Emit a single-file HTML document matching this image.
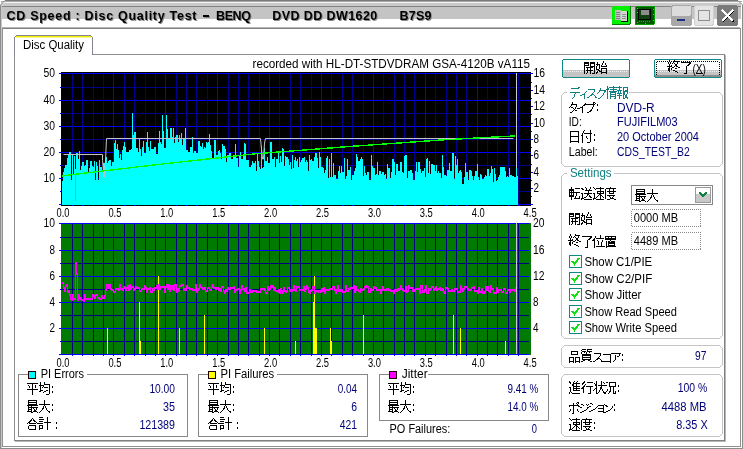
<!DOCTYPE html>
<html><head><meta charset="utf-8"><style>
html,body{margin:0;padding:0;background:#fff;width:743px;height:449px;overflow:hidden}
svg{display:block;will-change:transform}
text{font-family:"Liberation Sans",sans-serif}
</style></head><body>
<svg width="743" height="449" viewBox="0 0 743 449" shape-rendering="crispEdges">
<rect x="0" y="0" width="743" height="449" fill="#ffffff"/>
<rect x="1" y="0" width="741" height="1" fill="#7a7a7a"/>
<rect x="1" y="1" width="741" height="1" fill="#a8a8a8"/>
<rect x="2" y="2" width="739" height="1" fill="#f4f4f4"/>
<rect x="2" y="3" width="739" height="3" fill="#cacaca"/>
<rect x="2" y="6" width="739" height="1" fill="#848484"/>
<rect x="2" y="7" width="739" height="12" fill="#c4c4c4"/>
<rect x="2" y="27" width="738" height="1" fill="#b8b8b8"/>
<rect x="2" y="28" width="738" height="1" fill="#808080"/>
<rect x="0" y="1" width="1" height="448" fill="#8c8c8c"/>
<rect x="1" y="2" width="1" height="446" fill="#c8c8c8"/>
<rect x="2" y="28" width="1" height="419" fill="#909090"/>
<rect x="742" y="1" width="1" height="448" fill="#8c8c8c"/>
<rect x="740" y="28" width="1" height="419" fill="#909090"/>
<rect x="2" y="446" width="739" height="1" fill="#909090"/>
<rect x="0" y="448" width="743" height="1" fill="#8c8c8c"/>
<rect x="0" y="0" width="5" height="1" fill="#fff"/><rect x="0" y="0" width="1" height="5" fill="#fff"/>
<path d="M0.5 5L5 0.5" stroke="#8c8c8c" shape-rendering="auto"/><path d="M1.8 5.5L5.5 1.8" stroke="#e8e8e8" shape-rendering="auto"/>
<rect x="738" y="0" width="5" height="1" fill="#fff"/><rect x="742" y="0" width="1" height="5" fill="#fff"/>
<path d="M742.5 5L738 0.5" stroke="#8c8c8c" shape-rendering="auto"/>
<text x="7.5" y="20.5" font-size="12.5" fill="#8a8a8a" text-anchor="start" font-weight="bold" textLength="190" lengthAdjust="spacing" >CD Speed : Disc Quality Test</text>
<text x="6.5" y="19.5" font-size="12.5" fill="#000" text-anchor="start" font-weight="bold" textLength="190" lengthAdjust="spacing" >CD Speed : Disc Quality Test</text>
<text x="217" y="20.5" font-size="12.5" fill="#8a8a8a" text-anchor="start" font-weight="bold" textLength="35" lengthAdjust="spacing" >BENQ</text>
<text x="216" y="19.5" font-size="12.5" fill="#000" text-anchor="start" font-weight="bold" textLength="35" lengthAdjust="spacing" >BENQ</text>
<text x="273.3" y="20.5" font-size="12.5" fill="#8a8a8a" text-anchor="start" font-weight="bold" textLength="105" lengthAdjust="spacing" >DVD DD DW1620</text>
<text x="272.3" y="19.5" font-size="12.5" fill="#000" text-anchor="start" font-weight="bold" textLength="105" lengthAdjust="spacing" >DVD DD DW1620</text>
<text x="400.5" y="20.5" font-size="12.5" fill="#8a8a8a" text-anchor="start" font-weight="bold" textLength="32" lengthAdjust="spacing" >B7S9</text>
<text x="399.5" y="19.5" font-size="12.5" fill="#000" text-anchor="start" font-weight="bold" textLength="32" lengthAdjust="spacing" >B7S9</text>
<rect x="204" y="16" width="6" height="2" fill="#8a8a8a"/><rect x="203" y="15" width="6" height="2" fill="#000"/>
<rect x="612" y="6" width="19" height="19" rx="2" fill="#008000"/>
<rect x="612" y="6" width="18" height="18" rx="2" fill="#00f000"/>
<rect x="615" y="10" width="6" height="10" fill="#c0c0c0"/>
<path d="M616 12h4M616 14h4M616 16h4M616 18h4" stroke="#808080"/>
<rect x="621" y="11" width="7" height="11" fill="#000"/>
<rect x="621" y="11" width="6" height="10" fill="#d4d4d4"/>
<path d="M622 14h4M622 16h4M622 18h4" stroke="#909090"/>
<rect x="635" y="6" width="20" height="19" rx="2" fill="#00a000"/>
<rect x="636" y="7" width="18" height="17" rx="1" fill="#005800"/>
<rect x="638.5" y="9.5" width="12" height="10" fill="#104010" stroke="#000"/>
<rect x="641" y="10" width="8" height="5" fill="#8c8c8c"/>
<path d="M637 8h1M653 9h1M637 12h1M653 14h1M637 22h1M653 20h1M645 23h1" stroke="#20e020"/>
<path d="M639 21h12" stroke="#707070" stroke-dasharray="1 1"/>
<rect x="671" y="5" width="21" height="21" rx="3" fill="#a8a8a8"/>
<rect x="672" y="6" width="19" height="10" rx="2" fill="#dcdcdc"/>
<rect x="677" y="19" width="8" height="2" fill="#203080"/>
<rect x="694" y="5" width="20" height="21" rx="3" fill="#cfcfcf"/>
<rect x="695" y="6" width="18" height="19" rx="2" fill="#e4e4e4"/>
<rect x="698.5" y="10.5" width="11" height="10" fill="none" stroke="#909090"/>
<rect x="717" y="5" width="21" height="21" rx="3" fill="#7a7a7a"/>
<path d="M722 10L733 21M733 10L722 21" stroke="#000" stroke-width="2.2" transform="translate(0.6,0.6)"/>
<path d="M722 10L733 21M733 10L722 21" stroke="#fff" stroke-width="2"/>
<rect x="14" y="54" width="711" height="1" fill="#8c8c8c"/>
<rect x="14" y="54" width="1" height="387" fill="#8c8c8c"/>
<rect x="724" y="54" width="1" height="387" fill="#808080"/>
<rect x="725" y="55" width="1" height="387" fill="#b8b8b8"/>
<rect x="14" y="440" width="711" height="1" fill="#808080"/>
<rect x="15" y="441" width="711" height="1" fill="#b8b8b8"/>
<rect x="15" y="36" width="77" height="19" fill="#ffffff"/>
<path d="M14.5 55V37.5L16.5 35.5H90.5L92.5 37.5V55" fill="none" stroke="#858590"/>
<rect x="16" y="36" width="75" height="1" fill="#f0f000"/>
<rect x="16" y="37" width="75" height="1" fill="#f4f488"/>
<text x="23" y="48.5" font-size="12" fill="#000" text-anchor="start" font-weight="normal" textLength="61" lengthAdjust="spacingAndGlyphs" >Disc Quality</text>
<text x="252.5" y="67.5" font-size="12" fill="#000" text-anchor="start" font-weight="normal" textLength="277.5" lengthAdjust="spacingAndGlyphs" >recorded with HL-DT-STDVDRAM GSA-4120B vA115</text>
<rect x="61" y="72" width="470" height="134" fill="#000"/>
<rect x="62" y="87" width="469" height="1" fill="#00008c"/><rect x="62" y="100" width="469" height="1" fill="#0000ff"/><rect x="62" y="113" width="469" height="1" fill="#00008c"/><rect x="62" y="126" width="469" height="1" fill="#0000ff"/><rect x="62" y="139" width="469" height="1" fill="#00008c"/><rect x="62" y="152" width="469" height="1" fill="#0000ff"/><rect x="62" y="165" width="469" height="1" fill="#00008c"/><rect x="62" y="178" width="469" height="1" fill="#0000ff"/><rect x="62" y="191" width="469" height="1" fill="#00008c"/><rect x="72" y="73" width="1" height="131" fill="#00008c"/><rect x="82" y="73" width="1" height="131" fill="#00008c"/><rect x="93" y="73" width="1" height="131" fill="#00008c"/><rect x="103" y="73" width="1" height="131" fill="#00008c"/><rect x="113" y="73" width="1" height="131" fill="#0000ff"/><rect x="124" y="73" width="1" height="131" fill="#00008c"/><rect x="134" y="73" width="1" height="131" fill="#00008c"/><rect x="145" y="73" width="1" height="131" fill="#00008c"/><rect x="155" y="73" width="1" height="131" fill="#00008c"/><rect x="165" y="73" width="1" height="131" fill="#0000ff"/><rect x="176" y="73" width="1" height="131" fill="#00008c"/><rect x="186" y="73" width="1" height="131" fill="#00008c"/><rect x="196" y="73" width="1" height="131" fill="#00008c"/><rect x="207" y="73" width="1" height="131" fill="#00008c"/><rect x="217" y="73" width="1" height="131" fill="#0000ff"/><rect x="228" y="73" width="1" height="131" fill="#00008c"/><rect x="238" y="73" width="1" height="131" fill="#00008c"/><rect x="248" y="73" width="1" height="131" fill="#00008c"/><rect x="259" y="73" width="1" height="131" fill="#00008c"/><rect x="269" y="73" width="1" height="131" fill="#0000ff"/><rect x="279" y="73" width="1" height="131" fill="#00008c"/><rect x="290" y="73" width="1" height="131" fill="#00008c"/><rect x="300" y="73" width="1" height="131" fill="#00008c"/><rect x="311" y="73" width="1" height="131" fill="#00008c"/><rect x="321" y="73" width="1" height="131" fill="#0000ff"/><rect x="331" y="73" width="1" height="131" fill="#00008c"/><rect x="342" y="73" width="1" height="131" fill="#00008c"/><rect x="352" y="73" width="1" height="131" fill="#00008c"/><rect x="363" y="73" width="1" height="131" fill="#00008c"/><rect x="373" y="73" width="1" height="131" fill="#0000ff"/><rect x="383" y="73" width="1" height="131" fill="#00008c"/><rect x="394" y="73" width="1" height="131" fill="#00008c"/><rect x="404" y="73" width="1" height="131" fill="#00008c"/><rect x="414" y="73" width="1" height="131" fill="#00008c"/><rect x="425" y="73" width="1" height="131" fill="#0000ff"/><rect x="435" y="73" width="1" height="131" fill="#00008c"/><rect x="446" y="73" width="1" height="131" fill="#00008c"/><rect x="456" y="73" width="1" height="131" fill="#00008c"/><rect x="466" y="73" width="1" height="131" fill="#00008c"/><rect x="477" y="73" width="1" height="131" fill="#0000ff"/><rect x="487" y="73" width="1" height="131" fill="#00008c"/><rect x="497" y="73" width="1" height="131" fill="#00008c"/><rect x="508" y="73" width="1" height="131" fill="#00008c"/><rect x="518" y="73" width="1" height="131" fill="#00008c"/>
<rect x="59" y="73" width="474" height="1" fill="#0000ff"/>
<rect x="516" y="73" width="1" height="131" fill="#c8c8c8"/>
<rect x="59" y="204" width="474" height="1" fill="#0000ff"/>
<path fill="#00ffff" d="M62 181V205h1V181zM63 172V205h1V172zM64 168V205h1V168zM65 165V205h1V165zM66 165V205h1V165zM67 158V205h1V158zM68 154V205h1V154zM69 152V205h1V152zM70 152V205h1V152zM71 180V205h1V180zM72 154V205h1V154zM73 174V205h1V174zM74 156V205h1V156zM75 169V205h1V169zM76 153V205h1V153zM77 153V205h1V153zM78 159V205h1V159zM79 151V205h1V151zM80 170V205h1V170zM81 166V205h1V166zM82 162V205h1V162zM83 162V205h1V162zM84 166V205h1V166zM85 165V205h1V165zM86 160V205h1V160zM87 160V205h1V160zM88 172V205h1V172zM89 168V205h1V168zM90 161V205h1V161zM91 161V205h1V161zM92 166V205h1V166zM93 167V205h1V167zM94 161V205h1V161zM95 180V205h1V180zM96 162V205h1V162zM97 166V205h1V166zM98 180V205h1V180zM99 160V205h1V160zM100 167V205h1V167zM101 167V205h1V167zM102 172V205h1V172zM103 163V205h1V163zM104 163V205h1V163zM105 160V205h1V160zM106 157V205h1V157zM107 163V205h1V163zM108 161V205h1V161zM109 160V205h1V160zM110 160V205h1V160zM111 166V205h1V166zM112 162V205h1V162zM113 162V205h1V162zM114 143V205h1V143zM115 140V205h1V140zM116 149V205h1V149zM117 144V205h1V144zM118 150V205h1V150zM119 158V205h1V158zM120 154V205h1V154zM121 160V205h1V160zM122 150V205h1V150zM123 146V205h1V146zM124 142V205h1V142zM125 147V205h1V147zM126 152V205h1V152zM127 152V205h1V152zM128 152V205h1V152zM129 150V205h1V150zM130 150V205h1V150zM131 149V205h1V149zM132 113V205h1V113zM133 135V205h1V135zM134 132V205h1V132zM135 132V205h1V132zM136 148V205h1V148zM137 148V205h1V148zM138 152V205h1V152zM139 139V205h1V139zM140 149V205h1V149zM141 156V205h1V156zM142 147V205h1V147zM143 141V205h1V141zM144 153V205h1V153zM145 153V205h1V153zM146 142V205h1V142zM147 132V205h1V132zM148 147V205h1V147zM149 151V205h1V151zM150 141V205h1V141zM151 149V205h1V149zM152 149V205h1V149zM153 149V205h1V149zM154 147V205h1V147zM155 147V205h1V147zM156 154V205h1V154zM157 154V205h1V154zM158 143V205h1V143zM159 131V205h1V131zM160 142V205h1V142zM161 144V205h1V144zM162 115V205h1V115zM163 131V205h1V131zM164 148V205h1V148zM165 148V205h1V148zM166 115V205h1V115zM167 129V205h1V129zM168 138V205h1V138zM169 138V205h1V138zM170 128V205h1V128zM171 128V205h1V128zM172 137V205h1V137zM173 128V205h1V128zM174 143V205h1V143zM175 137V205h1V137zM176 135V205h1V135zM177 135V205h1V135zM178 142V205h1V142zM179 135V205h1V135zM180 139V205h1V139zM181 133V205h1V133zM182 145V205h1V145zM183 139V205h1V139zM184 139V205h1V139zM185 128V205h1V128zM186 150V205h1V150zM187 150V205h1V150zM188 152V205h1V152zM189 152V205h1V152zM190 147V205h1V147zM191 147V205h1V147zM192 137V205h1V137zM193 153V205h1V153zM194 151V205h1V151zM195 151V205h1V151zM196 153V205h1V153zM197 153V205h1V153zM198 141V205h1V141zM199 141V205h1V141zM200 146V205h1V146zM201 147V205h1V147zM202 143V205h1V143zM203 149V205h1V149zM204 147V205h1V147zM205 148V205h1V148zM206 142V205h1V142zM207 143V205h1V143zM208 142V205h1V142zM209 134V205h1V134zM210 145V205h1V145zM211 151V205h1V151zM212 158V205h1V158zM213 158V205h1V158zM214 140V205h1V140zM215 140V205h1V140zM216 155V205h1V155zM217 155V205h1V155zM218 151V205h1V151zM219 150V205h1V150zM220 153V205h1V153zM221 159V205h1V159zM222 144V205h1V144zM223 146V205h1V146zM224 146V205h1V146zM225 149V205h1V149zM226 162V205h1V162zM227 155V205h1V155zM228 155V205h1V155zM229 153V205h1V153zM230 153V205h1V153zM231 159V205h1V159zM232 159V205h1V159zM233 155V205h1V155zM234 155V205h1V155zM235 144V205h1V144zM236 158V205h1V158zM237 158V205h1V158zM238 167V205h1V167zM239 155V205h1V155zM240 152V205h1V152zM241 159V205h1V159zM242 159V205h1V159zM243 155V205h1V155zM244 143V205h1V143zM245 144V205h1V144zM246 160V205h1V160zM247 160V205h1V160zM248 160V205h1V160zM249 167V205h1V167zM250 167V205h1V167zM251 165V205h1V165zM252 161V205h1V161zM253 163V205h1V163zM254 163V205h1V163zM255 161V205h1V161zM256 171V205h1V171zM257 154V205h1V154zM258 161V205h1V161zM259 167V205h1V167zM260 169V205h1V169zM261 146V205h1V146zM262 168V205h1V168zM263 167V205h1V167zM264 148V205h1V148zM265 161V205h1V161zM266 161V205h1V161zM267 157V205h1V157zM268 163V205h1V163zM269 163V205h1V163zM270 142V205h1V142zM271 142V205h1V142zM272 159V205h1V159zM273 159V205h1V159zM274 157V205h1V157zM275 167V205h1V167zM276 159V205h1V159zM277 159V205h1V159zM278 153V205h1V153zM279 163V205h1V163zM280 156V205h1V156zM281 162V205h1V162zM282 148V205h1V148zM283 149V205h1V149zM284 166V205h1V166zM285 156V205h1V156zM286 157V205h1V157zM287 157V205h1V157zM288 159V205h1V159zM289 165V205h1V165zM290 162V205h1V162zM291 169V205h1V169zM292 155V205h1V155zM293 168V205h1V168zM294 160V205h1V160zM295 157V205h1V157zM296 161V205h1V161zM297 159V205h1V159zM298 167V205h1V167zM299 157V205h1V157zM300 162V205h1V162zM301 160V205h1V160zM302 158V205h1V158zM303 158V205h1V158zM304 157V205h1V157zM305 162V205h1V162zM306 160V205h1V160zM307 162V205h1V162zM308 171V205h1V171zM309 155V205h1V155zM310 160V205h1V160zM311 159V205h1V159zM312 161V205h1V161zM313 161V205h1V161zM314 157V205h1V157zM315 153V205h1V153zM316 153V205h1V153zM317 158V205h1V158zM318 168V205h1V168zM319 152V205h1V152zM320 157V205h1V157zM321 167V205h1V167zM322 167V205h1V167zM323 168V205h1V168zM324 173V205h1V173zM325 170V205h1V170zM326 158V205h1V158zM327 156V205h1V156zM328 178V205h1V178zM329 159V205h1V159zM330 177V205h1V177zM331 153V205h1V153zM332 177V205h1V177zM333 163V205h1V163zM334 175V205h1V175zM335 175V205h1V175zM336 179V205h1V179zM337 179V205h1V179zM338 171V205h1V171zM339 166V205h1V166zM340 173V205h1V173zM341 166V205h1V166zM342 172V205h1V172zM343 172V205h1V172zM344 158V205h1V158zM345 179V205h1V179zM346 176V205h1V176zM347 159V205h1V159zM348 170V205h1V170zM349 170V205h1V170zM350 167V205h1V167zM351 180V205h1V180zM352 175V205h1V175zM353 175V205h1V175zM354 171V205h1V171zM355 168V205h1V168zM356 154V205h1V154zM357 157V205h1V157zM358 161V205h1V161zM359 161V205h1V161zM360 159V205h1V159zM361 157V205h1V157zM362 159V205h1V159zM363 176V205h1V176zM364 166V205h1V166zM365 173V205h1V173zM366 175V205h1V175zM367 172V205h1V172zM368 172V205h1V172zM369 180V205h1V180zM370 180V205h1V180zM371 155V205h1V155zM372 166V205h1V166zM373 168V205h1V168zM374 168V205h1V168zM375 175V205h1V175zM376 174V205h1V174zM377 162V205h1V162zM378 175V205h1V175zM379 171V205h1V171zM380 171V205h1V171zM381 174V205h1V174zM382 172V205h1V172zM383 172V205h1V172zM384 175V205h1V175zM385 174V205h1V174zM386 179V205h1V179zM387 164V205h1V164zM388 168V205h1V168zM389 168V205h1V168zM390 178V205h1V178zM391 172V205h1V172zM392 159V205h1V159zM393 159V205h1V159zM394 162V205h1V162zM395 175V205h1V175zM396 164V205h1V164zM397 164V205h1V164zM398 171V205h1V171zM399 171V205h1V171zM400 162V205h1V162zM401 162V205h1V162zM402 172V205h1V172zM403 173V205h1V173zM404 156V205h1V156zM405 155V205h1V155zM406 155V205h1V155zM407 178V205h1V178zM408 171V205h1V171zM409 171V205h1V171zM410 170V205h1V170zM411 170V205h1V170zM412 173V205h1V173zM413 180V205h1V180zM414 180V205h1V180zM415 171V205h1V171zM416 162V205h1V162zM417 172V205h1V172zM418 162V205h1V162zM419 162V205h1V162zM420 169V205h1V169zM421 173V205h1V173zM422 171V205h1V171zM423 171V205h1V171zM424 168V205h1V168zM425 177V205h1V177zM426 159V205h1V159zM427 158V205h1V158zM428 173V205h1V173zM429 161V205h1V161zM430 174V205h1V174zM431 164V205h1V164zM432 164V205h1V164zM433 165V205h1V165zM434 165V205h1V165zM435 171V205h1V171zM436 165V205h1V165zM437 173V205h1V173zM438 171V205h1V171zM439 173V205h1V173zM440 173V205h1V173zM441 178V205h1V178zM442 155V205h1V155zM443 167V205h1V167zM444 175V205h1V175zM445 175V205h1V175zM446 176V205h1V176zM447 170V205h1V170zM448 170V205h1V170zM449 163V205h1V163zM450 171V205h1V171zM451 171V205h1V171zM452 153V205h1V153zM453 153V205h1V153zM454 179V205h1V179zM455 156V205h1V156zM456 165V205h1V165zM457 159V205h1V159zM458 173V205h1V173zM459 171V205h1V171zM460 170V205h1V170zM461 172V205h1V172zM462 184V205h1V184zM463 184V205h1V184zM464 177V205h1V177zM465 163V205h1V163zM466 172V205h1V172zM467 172V205h1V172zM468 180V205h1V180zM469 170V205h1V170zM470 170V205h1V170zM471 171V205h1V171zM472 176V205h1V176zM473 180V205h1V180zM474 176V205h1V176zM475 171V205h1V171zM476 171V205h1V171zM477 164V205h1V164zM478 177V205h1V177zM479 180V205h1V180zM480 174V205h1V174zM481 175V205h1V175zM482 179V205h1V179zM483 179V205h1V179zM484 177V205h1V177zM485 175V205h1V175zM486 176V205h1V176zM487 169V205h1V169zM488 169V205h1V169zM489 176V205h1V176zM490 173V205h1V173zM491 166V205h1V166zM492 169V205h1V169zM493 182V205h1V182zM494 168V205h1V168zM495 174V205h1V174zM496 181V205h1V181zM497 180V205h1V180zM498 177V205h1V177zM499 175V205h1V175zM500 167V205h1V167zM501 167V205h1V167zM502 167V205h1V167zM503 167V205h1V167zM504 167V205h1V167zM505 171V205h1V171zM506 177V205h1V177zM507 176V205h1V176zM508 177V205h1V177zM509 168V205h1V168zM510 175V205h1V175zM511 175V205h1V175zM512 176V205h1V176zM513 176V205h1V176zM514 177V205h1V177zM515 177V205h1V177zM516 168V205h1V168zM517 176V205h1V176z"/>
<rect x="61" y="205" width="470" height="1" fill="#000"/>
<rect x="59" y="204" width="3" height="1" fill="#0000ff"/>
<rect x="528" y="204" width="5" height="1" fill="#0000ff"/>
<rect x="72" y="205" width="1" height="1" fill="#0000ff"/>
<rect x="82" y="205" width="1" height="1" fill="#0000ff"/>
<rect x="93" y="205" width="1" height="1" fill="#0000ff"/>
<rect x="103" y="205" width="1" height="1" fill="#0000ff"/>
<rect x="113" y="205" width="1" height="1" fill="#0000ff"/>
<rect x="124" y="205" width="1" height="1" fill="#0000ff"/>
<rect x="134" y="205" width="1" height="1" fill="#0000ff"/>
<rect x="145" y="205" width="1" height="1" fill="#0000ff"/>
<rect x="155" y="205" width="1" height="1" fill="#0000ff"/>
<rect x="165" y="205" width="1" height="1" fill="#0000ff"/>
<rect x="176" y="205" width="1" height="1" fill="#0000ff"/>
<rect x="186" y="205" width="1" height="1" fill="#0000ff"/>
<rect x="196" y="205" width="1" height="1" fill="#0000ff"/>
<rect x="207" y="205" width="1" height="1" fill="#0000ff"/>
<rect x="217" y="205" width="1" height="1" fill="#0000ff"/>
<rect x="228" y="205" width="1" height="1" fill="#0000ff"/>
<rect x="238" y="205" width="1" height="1" fill="#0000ff"/>
<rect x="248" y="205" width="1" height="1" fill="#0000ff"/>
<rect x="259" y="205" width="1" height="1" fill="#0000ff"/>
<rect x="269" y="205" width="1" height="1" fill="#0000ff"/>
<rect x="279" y="205" width="1" height="1" fill="#0000ff"/>
<rect x="290" y="205" width="1" height="1" fill="#0000ff"/>
<rect x="300" y="205" width="1" height="1" fill="#0000ff"/>
<rect x="311" y="205" width="1" height="1" fill="#0000ff"/>
<rect x="321" y="205" width="1" height="1" fill="#0000ff"/>
<rect x="331" y="205" width="1" height="1" fill="#0000ff"/>
<rect x="342" y="205" width="1" height="1" fill="#0000ff"/>
<rect x="352" y="205" width="1" height="1" fill="#0000ff"/>
<rect x="363" y="205" width="1" height="1" fill="#0000ff"/>
<rect x="373" y="205" width="1" height="1" fill="#0000ff"/>
<rect x="383" y="205" width="1" height="1" fill="#0000ff"/>
<rect x="394" y="205" width="1" height="1" fill="#0000ff"/>
<rect x="404" y="205" width="1" height="1" fill="#0000ff"/>
<rect x="414" y="205" width="1" height="1" fill="#0000ff"/>
<rect x="425" y="205" width="1" height="1" fill="#0000ff"/>
<rect x="435" y="205" width="1" height="1" fill="#0000ff"/>
<rect x="446" y="205" width="1" height="1" fill="#0000ff"/>
<rect x="456" y="205" width="1" height="1" fill="#0000ff"/>
<rect x="466" y="205" width="1" height="1" fill="#0000ff"/>
<rect x="477" y="205" width="1" height="1" fill="#0000ff"/>
<rect x="487" y="205" width="1" height="1" fill="#0000ff"/>
<rect x="497" y="205" width="1" height="1" fill="#0000ff"/>
<rect x="508" y="205" width="1" height="1" fill="#0000ff"/>
<rect x="518" y="205" width="1" height="1" fill="#0000ff"/>
<rect x="60" y="87" width="1" height="1" fill="#0000ff"/>
<rect x="59" y="100" width="2" height="1" fill="#0000ff"/>
<rect x="60" y="113" width="1" height="1" fill="#0000ff"/>
<rect x="59" y="126" width="2" height="1" fill="#0000ff"/>
<rect x="60" y="139" width="1" height="1" fill="#0000ff"/>
<rect x="59" y="152" width="2" height="1" fill="#0000ff"/>
<rect x="60" y="165" width="1" height="1" fill="#0000ff"/>
<rect x="59" y="178" width="2" height="1" fill="#0000ff"/>
<rect x="60" y="191" width="1" height="1" fill="#0000ff"/>
<rect x="531" y="82" width="1" height="1" fill="#0000ff"/>
<rect x="531" y="90" width="2" height="1" fill="#0000ff"/>
<rect x="531" y="98" width="1" height="1" fill="#0000ff"/>
<rect x="531" y="106" width="2" height="1" fill="#0000ff"/>
<rect x="531" y="114" width="1" height="1" fill="#0000ff"/>
<rect x="531" y="123" width="2" height="1" fill="#0000ff"/>
<rect x="531" y="131" width="1" height="1" fill="#0000ff"/>
<rect x="531" y="139" width="2" height="1" fill="#0000ff"/>
<rect x="531" y="147" width="1" height="1" fill="#0000ff"/>
<rect x="531" y="155" width="2" height="1" fill="#0000ff"/>
<rect x="531" y="164" width="1" height="1" fill="#0000ff"/>
<rect x="531" y="172" width="2" height="1" fill="#0000ff"/>
<rect x="531" y="180" width="1" height="1" fill="#0000ff"/>
<rect x="531" y="188" width="2" height="1" fill="#0000ff"/>
<rect x="531" y="196" width="1" height="1" fill="#0000ff"/>
<polyline fill="none" stroke="#c4c4c4" stroke-width="1" shape-rendering="auto" points="63.5,154.5 102.5,154.5 102.5,160.5 104,177.5 105.5,160.5 106.5,138.5 260.5,138.5 261.5,149 262.5,159 263.5,159 264.5,143 265.5,138.5 513.5,138.5"/>
<path fill="#00ff00" d="M62 175h1v2h-1zM63 175h1v2h-1zM64 175h1v1h-1zM65 175h1v1h-1zM66 175h1v1h-1zM67 175h1v1h-1zM68 174h1v2h-1zM69 174h1v2h-1zM70 174h1v2h-1zM71 174h1v1h-1zM72 174h1v1h-1zM73 174h1v1h-1zM74 174h1v1h-1zM75 174h1v1h-1zM76 173h1v2h-1zM77 173h1v2h-1zM78 173h1v2h-1zM79 173h1v1h-1zM80 173h1v1h-1zM81 173h1v1h-1zM82 173h1v1h-1zM83 173h1v1h-1zM84 172h1v2h-1zM85 172h1v2h-1zM86 172h1v2h-1zM87 172h1v1h-1zM88 172h1v1h-1zM89 172h1v1h-1zM90 172h1v1h-1zM91 172h1v1h-1zM92 172h1v1h-1zM93 171h1v2h-1zM94 171h1v2h-1zM95 171h1v2h-1zM96 171h1v1h-1zM97 171h1v1h-1zM98 171h1v1h-1zM99 171h1v1h-1zM100 171h1v1h-1zM101 170h1v2h-1zM102 170h1v2h-1zM103 170h1v2h-1zM104 170h1v1h-1zM105 170h1v1h-1zM106 170h1v1h-1zM107 170h1v1h-1zM108 170h1v1h-1zM109 170h1v1h-1zM110 169h1v2h-1zM111 169h1v2h-1zM112 169h1v2h-1zM113 169h1v1h-1zM114 169h1v1h-1zM115 169h1v1h-1zM116 169h1v1h-1zM117 169h1v1h-1zM118 168h1v2h-1zM119 168h1v2h-1zM120 168h1v2h-1zM121 168h1v1h-1zM122 168h1v1h-1zM123 168h1v1h-1zM124 168h1v1h-1zM125 168h1v1h-1zM126 168h1v1h-1zM127 167h1v2h-1zM128 167h1v2h-1zM129 167h1v2h-1zM130 167h1v1h-1zM131 167h1v1h-1zM132 167h1v1h-1zM133 167h1v1h-1zM134 167h1v1h-1zM135 166h1v2h-1zM136 166h1v2h-1zM137 166h1v2h-1zM138 166h1v1h-1zM139 166h1v1h-1zM140 166h1v1h-1zM141 166h1v1h-1zM142 166h1v1h-1zM143 166h1v1h-1zM144 165h1v2h-1zM145 165h1v2h-1zM146 165h1v2h-1zM147 165h1v1h-1zM148 165h1v1h-1zM149 165h1v1h-1zM150 165h1v1h-1zM151 165h1v1h-1zM152 164h1v2h-1zM153 164h1v2h-1zM154 164h1v2h-1zM155 164h1v1h-1zM156 164h1v1h-1zM157 164h1v1h-1zM158 164h1v1h-1zM159 164h1v1h-1zM160 164h1v1h-1zM161 163h1v2h-1zM162 163h1v2h-1zM163 163h1v2h-1zM164 163h1v1h-1zM165 163h1v1h-1zM166 163h1v1h-1zM167 163h1v1h-1zM168 163h1v1h-1zM169 163h1v1h-1zM170 162h1v2h-1zM171 162h1v2h-1zM172 162h1v2h-1zM173 162h1v1h-1zM174 162h1v1h-1zM175 162h1v1h-1zM176 162h1v1h-1zM177 162h1v1h-1zM178 162h1v1h-1zM179 161h1v2h-1zM180 161h1v2h-1zM181 161h1v2h-1zM182 161h1v1h-1zM183 161h1v1h-1zM184 161h1v1h-1zM185 161h1v1h-1zM186 161h1v1h-1zM187 161h1v1h-1zM188 160h1v2h-1zM189 160h1v2h-1zM190 160h1v2h-1zM191 160h1v2h-1zM192 160h1v1h-1zM193 160h1v1h-1zM194 160h1v1h-1zM195 160h1v1h-1zM196 160h1v1h-1zM197 159h1v2h-1zM198 159h1v2h-1zM199 159h1v2h-1zM200 159h1v2h-1zM201 159h1v1h-1zM202 159h1v1h-1zM203 159h1v1h-1zM204 159h1v1h-1zM205 159h1v1h-1zM206 158h1v2h-1zM207 158h1v2h-1zM208 158h1v2h-1zM209 158h1v2h-1zM210 158h1v1h-1zM211 158h1v1h-1zM212 158h1v1h-1zM213 158h1v1h-1zM214 158h1v1h-1zM215 157h1v2h-1zM216 157h1v2h-1zM217 157h1v2h-1zM218 157h1v2h-1zM219 157h1v1h-1zM220 157h1v1h-1zM221 157h1v1h-1zM222 157h1v1h-1zM223 157h1v1h-1zM224 156h1v2h-1zM225 156h1v2h-1zM226 156h1v2h-1zM227 156h1v2h-1zM228 156h1v1h-1zM229 156h1v1h-1zM230 156h1v1h-1zM231 156h1v1h-1zM232 156h1v1h-1zM233 156h1v1h-1zM234 155h1v2h-1zM235 155h1v2h-1zM236 155h1v2h-1zM237 155h1v1h-1zM238 155h1v1h-1zM239 155h1v1h-1zM240 155h1v1h-1zM241 155h1v1h-1zM242 155h1v1h-1zM243 154h1v2h-1zM244 154h1v2h-1zM245 154h1v2h-1zM246 154h1v1h-1zM247 154h1v1h-1zM248 154h1v1h-1zM249 154h1v1h-1zM250 154h1v1h-1zM251 154h1v1h-1zM252 153h1v2h-1zM253 153h1v2h-1zM254 153h1v2h-1zM255 153h1v1h-1zM256 153h1v1h-1zM257 153h1v1h-1zM258 153h1v1h-1zM259 153h1v1h-1zM260 153h1v1h-1zM261 153h1v1h-1zM262 153h1v1h-1zM263 152h1v2h-1zM264 152h1v2h-1zM265 152h1v2h-1zM266 152h1v2h-1zM267 152h1v2h-1zM268 152h1v1h-1zM269 152h1v1h-1zM270 152h1v1h-1zM271 152h1v1h-1zM272 152h1v1h-1zM273 152h1v1h-1zM274 152h1v1h-1zM275 152h1v1h-1zM276 151h1v2h-1zM277 151h1v2h-1zM278 151h1v2h-1zM279 151h1v2h-1zM280 151h1v2h-1zM281 151h1v1h-1zM282 151h1v1h-1zM283 151h1v1h-1zM284 151h1v1h-1zM285 151h1v1h-1zM286 151h1v1h-1zM287 151h1v1h-1zM288 151h1v1h-1zM289 150h1v2h-1zM290 150h1v2h-1zM291 150h1v2h-1zM292 150h1v2h-1zM293 150h1v2h-1zM294 150h1v1h-1zM295 150h1v1h-1zM296 150h1v1h-1zM297 150h1v1h-1zM298 150h1v1h-1zM299 150h1v1h-1zM300 150h1v1h-1zM301 150h1v1h-1zM302 149h1v2h-1zM303 149h1v2h-1zM304 149h1v2h-1zM305 149h1v2h-1zM306 149h1v2h-1zM307 149h1v1h-1zM308 149h1v1h-1zM309 149h1v1h-1zM310 149h1v1h-1zM311 149h1v1h-1zM312 149h1v1h-1zM313 149h1v1h-1zM314 149h1v1h-1zM315 148h1v2h-1zM316 148h1v2h-1zM317 148h1v2h-1zM318 148h1v2h-1zM319 148h1v2h-1zM320 148h1v1h-1zM321 148h1v1h-1zM322 148h1v1h-1zM323 148h1v1h-1zM324 148h1v1h-1zM325 148h1v1h-1zM326 148h1v1h-1zM327 147h1v2h-1zM328 147h1v2h-1zM329 147h1v2h-1zM330 147h1v2h-1zM331 147h1v2h-1zM332 147h1v2h-1zM333 147h1v1h-1zM334 147h1v1h-1zM335 147h1v1h-1zM336 147h1v1h-1zM337 147h1v1h-1zM338 147h1v1h-1zM339 147h1v1h-1zM340 146h1v2h-1zM341 146h1v2h-1zM342 146h1v2h-1zM343 146h1v2h-1zM344 146h1v2h-1zM345 146h1v1h-1zM346 146h1v1h-1zM347 146h1v1h-1zM348 146h1v1h-1zM349 146h1v1h-1zM350 146h1v1h-1zM351 146h1v1h-1zM352 146h1v1h-1zM353 145h1v2h-1zM354 145h1v2h-1zM355 145h1v2h-1zM356 145h1v2h-1zM357 145h1v2h-1zM358 145h1v2h-1zM359 145h1v1h-1zM360 145h1v1h-1zM361 145h1v1h-1zM362 145h1v1h-1zM363 145h1v1h-1zM364 145h1v1h-1zM365 145h1v1h-1zM366 145h1v1h-1zM367 145h1v1h-1zM368 144h1v2h-1zM369 144h1v2h-1zM370 144h1v2h-1zM371 144h1v2h-1zM372 144h1v2h-1zM373 144h1v1h-1zM374 144h1v1h-1zM375 144h1v1h-1zM376 144h1v1h-1zM377 144h1v1h-1zM378 144h1v1h-1zM379 144h1v1h-1zM380 144h1v1h-1zM381 144h1v1h-1zM382 143h1v2h-1zM383 143h1v2h-1zM384 143h1v2h-1zM385 143h1v2h-1zM386 143h1v2h-1zM387 143h1v1h-1zM388 143h1v1h-1zM389 143h1v1h-1zM390 143h1v1h-1zM391 143h1v1h-1zM392 143h1v1h-1zM393 143h1v1h-1zM394 143h1v1h-1zM395 143h1v1h-1zM396 142h1v2h-1zM397 142h1v2h-1zM398 142h1v2h-1zM399 142h1v2h-1zM400 142h1v2h-1zM401 142h1v2h-1zM402 142h1v1h-1zM403 142h1v1h-1zM404 142h1v1h-1zM405 142h1v1h-1zM406 142h1v1h-1zM407 142h1v1h-1zM408 142h1v1h-1zM409 142h1v1h-1zM410 141h1v2h-1zM411 141h1v2h-1zM412 141h1v2h-1zM413 141h1v2h-1zM414 141h1v2h-1zM415 141h1v2h-1zM416 141h1v1h-1zM417 141h1v1h-1zM418 141h1v1h-1zM419 141h1v1h-1zM420 141h1v1h-1zM421 141h1v1h-1zM422 141h1v1h-1zM423 141h1v1h-1zM424 140h1v2h-1zM425 140h1v2h-1zM426 140h1v2h-1zM427 140h1v2h-1zM428 140h1v2h-1zM429 140h1v2h-1zM430 140h1v1h-1zM431 140h1v1h-1zM432 140h1v1h-1zM433 140h1v1h-1zM434 140h1v1h-1zM435 140h1v1h-1zM436 140h1v1h-1zM437 140h1v1h-1zM438 139h1v2h-1zM439 139h1v2h-1zM440 139h1v2h-1zM441 139h1v2h-1zM442 139h1v2h-1zM443 139h1v2h-1zM444 139h1v1h-1zM445 139h1v1h-1zM446 139h1v1h-1zM447 139h1v1h-1zM448 139h1v1h-1zM449 139h1v1h-1zM450 139h1v1h-1zM451 139h1v1h-1zM452 139h1v1h-1zM453 139h1v1h-1zM454 139h1v1h-1zM455 138h1v2h-1zM456 138h1v2h-1zM457 138h1v2h-1zM458 138h1v2h-1zM459 138h1v2h-1zM460 138h1v2h-1zM461 138h1v2h-1zM462 138h1v1h-1zM463 138h1v1h-1zM464 138h1v1h-1zM465 138h1v1h-1zM466 138h1v1h-1zM467 138h1v1h-1zM468 138h1v1h-1zM469 138h1v1h-1zM470 138h1v1h-1zM471 138h1v1h-1zM472 138h1v1h-1zM473 137h1v2h-1zM474 137h1v2h-1zM475 137h1v2h-1zM476 137h1v2h-1zM477 137h1v2h-1zM478 137h1v2h-1zM479 137h1v2h-1zM480 137h1v1h-1zM481 137h1v1h-1zM482 137h1v1h-1zM483 137h1v1h-1zM484 137h1v1h-1zM485 137h1v1h-1zM486 137h1v1h-1zM487 137h1v1h-1zM488 137h1v1h-1zM489 137h1v1h-1zM490 137h1v1h-1zM491 136h1v2h-1zM492 136h1v2h-1zM493 136h1v2h-1zM494 136h1v2h-1zM495 136h1v2h-1zM496 136h1v2h-1zM497 136h1v2h-1zM498 136h1v2h-1zM499 136h1v1h-1zM500 136h1v1h-1zM501 136h1v1h-1zM502 136h1v1h-1zM503 136h1v1h-1zM504 136h1v1h-1zM505 136h1v1h-1zM506 136h1v1h-1zM507 136h1v1h-1zM508 136h1v1h-1zM509 136h1v1h-1zM510 135h1v2h-1zM511 135h1v2h-1zM512 135h1v2h-1zM513 135h1v2h-1zM514 135h1v2h-1z"/>
<rect x="75" y="174" width="1" height="27" fill="#00ff00"/>
<text x="55" y="77" font-size="12" fill="#000" text-anchor="end" font-weight="normal" textLength="11.5" lengthAdjust="spacingAndGlyphs" >50</text>
<text x="55" y="104" font-size="12" fill="#000" text-anchor="end" font-weight="normal" textLength="11.5" lengthAdjust="spacingAndGlyphs" >40</text>
<text x="55" y="130" font-size="12" fill="#000" text-anchor="end" font-weight="normal" textLength="11.5" lengthAdjust="spacingAndGlyphs" >30</text>
<text x="55" y="156" font-size="12" fill="#000" text-anchor="end" font-weight="normal" textLength="11.5" lengthAdjust="spacingAndGlyphs" >20</text>
<text x="55" y="182" font-size="12" fill="#000" text-anchor="end" font-weight="normal" textLength="11.5" lengthAdjust="spacingAndGlyphs" >10</text>
<text x="533.5" y="77" font-size="12" fill="#000" text-anchor="start" font-weight="normal" textLength="11.5" lengthAdjust="spacingAndGlyphs" >16</text>
<text x="533.5" y="94" font-size="12" fill="#000" text-anchor="start" font-weight="normal" textLength="11.5" lengthAdjust="spacingAndGlyphs" >14</text>
<text x="533.5" y="110" font-size="12" fill="#000" text-anchor="start" font-weight="normal" textLength="11.5" lengthAdjust="spacingAndGlyphs" >12</text>
<text x="533.5" y="127" font-size="12" fill="#000" text-anchor="start" font-weight="normal" textLength="11.5" lengthAdjust="spacingAndGlyphs" >10</text>
<text x="533.5" y="143" font-size="12" fill="#000" text-anchor="start" font-weight="normal" textLength="5.5" lengthAdjust="spacingAndGlyphs" >8</text>
<text x="533.5" y="159" font-size="12" fill="#000" text-anchor="start" font-weight="normal" textLength="5.5" lengthAdjust="spacingAndGlyphs" >6</text>
<text x="533.5" y="176" font-size="12" fill="#000" text-anchor="start" font-weight="normal" textLength="5.5" lengthAdjust="spacingAndGlyphs" >4</text>
<text x="533.5" y="192" font-size="12" fill="#000" text-anchor="start" font-weight="normal" textLength="5.5" lengthAdjust="spacingAndGlyphs" >2</text>
<text x="63.0" y="217" font-size="12" fill="#000" text-anchor="middle" font-weight="normal" textLength="13" lengthAdjust="spacingAndGlyphs" >0.0</text>
<text x="114.9" y="217" font-size="12" fill="#000" text-anchor="middle" font-weight="normal" textLength="13" lengthAdjust="spacingAndGlyphs" >0.5</text>
<text x="166.8" y="217" font-size="12" fill="#000" text-anchor="middle" font-weight="normal" textLength="13" lengthAdjust="spacingAndGlyphs" >1.0</text>
<text x="218.7" y="217" font-size="12" fill="#000" text-anchor="middle" font-weight="normal" textLength="13" lengthAdjust="spacingAndGlyphs" >1.5</text>
<text x="270.6" y="217" font-size="12" fill="#000" text-anchor="middle" font-weight="normal" textLength="13" lengthAdjust="spacingAndGlyphs" >2.0</text>
<text x="322.5" y="217" font-size="12" fill="#000" text-anchor="middle" font-weight="normal" textLength="13" lengthAdjust="spacingAndGlyphs" >2.5</text>
<text x="374.4" y="217" font-size="12" fill="#000" text-anchor="middle" font-weight="normal" textLength="13" lengthAdjust="spacingAndGlyphs" >3.0</text>
<text x="426.3" y="217" font-size="12" fill="#000" text-anchor="middle" font-weight="normal" textLength="13" lengthAdjust="spacingAndGlyphs" >3.5</text>
<text x="478.2" y="217" font-size="12" fill="#000" text-anchor="middle" font-weight="normal" textLength="13" lengthAdjust="spacingAndGlyphs" >4.0</text>
<text x="530.0999999999999" y="217" font-size="12" fill="#000" text-anchor="middle" font-weight="normal" textLength="13" lengthAdjust="spacingAndGlyphs" >4.5</text>
<rect x="61" y="223" width="470" height="132" fill="#007a00"/>
<rect x="62" y="237" width="467" height="1" fill="#000080"/><rect x="62" y="250" width="467" height="1" fill="#0000ff"/><rect x="62" y="263" width="467" height="1" fill="#000080"/><rect x="62" y="276" width="467" height="1" fill="#0000ff"/><rect x="62" y="289" width="467" height="1" fill="#000080"/><rect x="62" y="302" width="467" height="1" fill="#0000ff"/><rect x="62" y="315" width="467" height="1" fill="#000080"/><rect x="62" y="328" width="467" height="1" fill="#0000ff"/><rect x="62" y="341" width="467" height="1" fill="#000080"/><rect x="72" y="223" width="1" height="131" fill="#000080"/><rect x="82" y="223" width="1" height="131" fill="#000080"/><rect x="93" y="223" width="1" height="131" fill="#000080"/><rect x="103" y="223" width="1" height="131" fill="#000080"/><rect x="113" y="223" width="1" height="131" fill="#0000ff"/><rect x="124" y="223" width="1" height="131" fill="#000080"/><rect x="134" y="223" width="1" height="131" fill="#000080"/><rect x="145" y="223" width="1" height="131" fill="#000080"/><rect x="155" y="223" width="1" height="131" fill="#000080"/><rect x="165" y="223" width="1" height="131" fill="#0000ff"/><rect x="176" y="223" width="1" height="131" fill="#000080"/><rect x="186" y="223" width="1" height="131" fill="#000080"/><rect x="196" y="223" width="1" height="131" fill="#000080"/><rect x="207" y="223" width="1" height="131" fill="#000080"/><rect x="217" y="223" width="1" height="131" fill="#0000ff"/><rect x="228" y="223" width="1" height="131" fill="#000080"/><rect x="238" y="223" width="1" height="131" fill="#000080"/><rect x="248" y="223" width="1" height="131" fill="#000080"/><rect x="259" y="223" width="1" height="131" fill="#000080"/><rect x="269" y="223" width="1" height="131" fill="#0000ff"/><rect x="279" y="223" width="1" height="131" fill="#000080"/><rect x="290" y="223" width="1" height="131" fill="#000080"/><rect x="300" y="223" width="1" height="131" fill="#000080"/><rect x="311" y="223" width="1" height="131" fill="#000080"/><rect x="321" y="223" width="1" height="131" fill="#0000ff"/><rect x="331" y="223" width="1" height="131" fill="#000080"/><rect x="342" y="223" width="1" height="131" fill="#000080"/><rect x="352" y="223" width="1" height="131" fill="#000080"/><rect x="363" y="223" width="1" height="131" fill="#000080"/><rect x="373" y="223" width="1" height="131" fill="#0000ff"/><rect x="383" y="223" width="1" height="131" fill="#000080"/><rect x="394" y="223" width="1" height="131" fill="#000080"/><rect x="404" y="223" width="1" height="131" fill="#000080"/><rect x="414" y="223" width="1" height="131" fill="#000080"/><rect x="425" y="223" width="1" height="131" fill="#0000ff"/><rect x="435" y="223" width="1" height="131" fill="#000080"/><rect x="446" y="223" width="1" height="131" fill="#000080"/><rect x="456" y="223" width="1" height="131" fill="#000080"/><rect x="466" y="223" width="1" height="131" fill="#000080"/><rect x="477" y="223" width="1" height="131" fill="#0000ff"/><rect x="487" y="223" width="1" height="131" fill="#000080"/><rect x="497" y="223" width="1" height="131" fill="#000080"/><rect x="508" y="223" width="1" height="131" fill="#000080"/><rect x="518" y="223" width="1" height="131" fill="#000080"/>
<rect x="59" y="223" width="470" height="1" fill="#0000ff"/>
<rect x="59" y="354" width="470" height="1" fill="#0000ff"/>
<rect x="60" y="237" width="2" height="1" fill="#0000ff"/>
<rect x="59" y="250" width="3" height="1" fill="#0000ff"/>
<rect x="60" y="263" width="2" height="1" fill="#0000ff"/>
<rect x="59" y="276" width="3" height="1" fill="#0000ff"/>
<rect x="60" y="289" width="2" height="1" fill="#0000ff"/>
<rect x="59" y="302" width="3" height="1" fill="#0000ff"/>
<rect x="60" y="315" width="2" height="1" fill="#0000ff"/>
<rect x="59" y="328" width="3" height="1" fill="#0000ff"/>
<rect x="60" y="341" width="2" height="1" fill="#0000ff"/>
<rect x="72" y="355" width="1" height="1" fill="#0000ff"/>
<rect x="82" y="355" width="1" height="1" fill="#0000ff"/>
<rect x="93" y="355" width="1" height="1" fill="#0000ff"/>
<rect x="103" y="355" width="1" height="1" fill="#0000ff"/>
<rect x="113" y="355" width="1" height="1" fill="#0000ff"/>
<rect x="124" y="355" width="1" height="1" fill="#0000ff"/>
<rect x="134" y="355" width="1" height="1" fill="#0000ff"/>
<rect x="145" y="355" width="1" height="1" fill="#0000ff"/>
<rect x="155" y="355" width="1" height="1" fill="#0000ff"/>
<rect x="165" y="355" width="1" height="1" fill="#0000ff"/>
<rect x="176" y="355" width="1" height="1" fill="#0000ff"/>
<rect x="186" y="355" width="1" height="1" fill="#0000ff"/>
<rect x="196" y="355" width="1" height="1" fill="#0000ff"/>
<rect x="207" y="355" width="1" height="1" fill="#0000ff"/>
<rect x="217" y="355" width="1" height="1" fill="#0000ff"/>
<rect x="228" y="355" width="1" height="1" fill="#0000ff"/>
<rect x="238" y="355" width="1" height="1" fill="#0000ff"/>
<rect x="248" y="355" width="1" height="1" fill="#0000ff"/>
<rect x="259" y="355" width="1" height="1" fill="#0000ff"/>
<rect x="269" y="355" width="1" height="1" fill="#0000ff"/>
<rect x="279" y="355" width="1" height="1" fill="#0000ff"/>
<rect x="290" y="355" width="1" height="1" fill="#0000ff"/>
<rect x="300" y="355" width="1" height="1" fill="#0000ff"/>
<rect x="311" y="355" width="1" height="1" fill="#0000ff"/>
<rect x="321" y="355" width="1" height="1" fill="#0000ff"/>
<rect x="331" y="355" width="1" height="1" fill="#0000ff"/>
<rect x="342" y="355" width="1" height="1" fill="#0000ff"/>
<rect x="352" y="355" width="1" height="1" fill="#0000ff"/>
<rect x="363" y="355" width="1" height="1" fill="#0000ff"/>
<rect x="373" y="355" width="1" height="1" fill="#0000ff"/>
<rect x="383" y="355" width="1" height="1" fill="#0000ff"/>
<rect x="394" y="355" width="1" height="1" fill="#0000ff"/>
<rect x="404" y="355" width="1" height="1" fill="#0000ff"/>
<rect x="414" y="355" width="1" height="1" fill="#0000ff"/>
<rect x="425" y="355" width="1" height="1" fill="#0000ff"/>
<rect x="435" y="355" width="1" height="1" fill="#0000ff"/>
<rect x="446" y="355" width="1" height="1" fill="#0000ff"/>
<rect x="456" y="355" width="1" height="1" fill="#0000ff"/>
<rect x="466" y="355" width="1" height="1" fill="#0000ff"/>
<rect x="477" y="355" width="1" height="1" fill="#0000ff"/>
<rect x="487" y="355" width="1" height="1" fill="#0000ff"/>
<rect x="497" y="355" width="1" height="1" fill="#0000ff"/>
<rect x="508" y="355" width="1" height="1" fill="#0000ff"/>
<rect x="518" y="355" width="1" height="1" fill="#0000ff"/>
<rect x="107" y="328" width="1" height="26" fill="#ffff00"/>
<rect x="139" y="302" width="1" height="52" fill="#ffff00"/>
<rect x="140" y="341" width="1" height="13" fill="#ffff00"/>
<rect x="158" y="276" width="1" height="78" fill="#ffff00"/>
<rect x="179" y="328" width="1" height="26" fill="#ffff00"/>
<rect x="204" y="315" width="1" height="39" fill="#ffff00"/>
<rect x="264" y="328" width="1" height="26" fill="#ffff00"/>
<rect x="295" y="341" width="1" height="13" fill="#ffff00"/>
<rect x="313" y="302" width="1" height="52" fill="#ffff00"/>
<rect x="314" y="276" width="1" height="78" fill="#ffff00"/>
<rect x="315" y="328" width="1" height="26" fill="#ffff00"/>
<rect x="316" y="328" width="1" height="26" fill="#ffff00"/>
<rect x="330" y="328" width="1" height="26" fill="#ffff00"/>
<rect x="331" y="341" width="1" height="13" fill="#ffff00"/>
<rect x="363" y="315" width="1" height="39" fill="#ffff00"/>
<rect x="453" y="315" width="1" height="39" fill="#ffff00"/>
<rect x="460" y="328" width="1" height="26" fill="#ffff00"/>
<rect x="505" y="341" width="1" height="13" fill="#ffff00"/>
<path fill="#ff00ff" d="M62 282h1V284h-1zM63 282h1V289h-1zM64 287h1V292h-1zM65 285h1V292h-1zM66 284h1V287h-1zM67 284h1V293h-1zM68 290h1V293h-1zM69 290h1V296h-1zM70 294h1V300h-1zM71 298h1V301h-1zM72 294h1V301h-1zM73 294h1V300h-1zM74 298h1V300h-1zM75 262h1V300h-1zM76 262h1V275h-1zM77 273h1V301h-1zM78 294h1V301h-1zM79 294h1V299h-1zM80 297h1V300h-1zM81 298h1V301h-1zM82 299h1V301h-1zM83 299h1V302h-1zM84 294h1V302h-1zM85 294h1V300h-1zM86 298h1V300h-1zM87 298h1V300h-1zM88 298h1V300h-1zM89 298h1V300h-1zM90 298h1V300h-1zM91 298h1V300h-1zM92 294h1V300h-1zM93 294h1V297h-1zM94 295h1V299h-1zM95 294h1V299h-1zM96 294h1V296h-1zM97 294h1V299h-1zM98 297h1V299h-1zM99 297h1V300h-1zM100 298h1V300h-1zM101 295h1V300h-1zM102 295h1V299h-1zM103 297h1V299h-1zM104 295h1V299h-1zM105 289h1V297h-1zM106 284h1V291h-1zM107 284h1V286h-1zM108 284h1V289h-1zM109 284h1V289h-1zM110 284h1V290h-1zM111 288h1V291h-1zM112 289h1V291h-1zM113 289h1V293h-1zM114 291h1V293h-1zM115 288h1V293h-1zM116 288h1V290h-1zM117 288h1V290h-1zM118 288h1V291h-1zM119 284h1V291h-1zM120 284h1V290h-1zM121 288h1V290h-1zM122 288h1V291h-1zM123 286h1V291h-1zM124 286h1V289h-1zM125 287h1V291h-1zM126 287h1V291h-1zM127 285h1V289h-1zM128 285h1V291h-1zM129 284h1V291h-1zM130 284h1V290h-1zM131 286h1V290h-1zM132 286h1V288h-1zM133 286h1V291h-1zM134 288h1V291h-1zM135 286h1V290h-1zM136 286h1V289h-1zM137 287h1V289h-1zM138 287h1V289h-1zM139 287h1V292h-1zM140 290h1V292h-1zM141 288h1V292h-1zM142 288h1V290h-1zM143 288h1V290h-1zM144 285h1V290h-1zM145 285h1V289h-1zM146 287h1V293h-1zM147 288h1V293h-1zM148 288h1V290h-1zM149 287h1V290h-1zM150 287h1V293h-1zM151 291h1V293h-1zM152 288h1V293h-1zM153 288h1V291h-1zM154 287h1V291h-1zM155 287h1V289h-1zM156 285h1V289h-1zM157 285h1V290h-1zM158 284h1V290h-1zM159 284h1V290h-1zM160 286h1V290h-1zM161 286h1V288h-1zM162 286h1V288h-1zM163 286h1V288h-1zM164 286h1V293h-1zM165 286h1V293h-1zM166 284h1V288h-1zM167 284h1V290h-1zM168 284h1V290h-1zM169 284h1V292h-1zM170 285h1V292h-1zM171 285h1V290h-1zM172 285h1V290h-1zM173 285h1V291h-1zM174 284h1V291h-1zM175 284h1V286h-1zM176 284h1V293h-1zM177 288h1V293h-1zM178 288h1V292h-1zM179 285h1V292h-1zM180 285h1V287h-1zM181 284h1V287h-1zM182 284h1V286h-1zM183 284h1V291h-1zM184 288h1V291h-1zM185 288h1V291h-1zM186 285h1V291h-1zM187 285h1V289h-1zM188 287h1V289h-1zM189 287h1V290h-1zM190 288h1V290h-1zM191 288h1V290h-1zM192 288h1V291h-1zM193 289h1V291h-1zM194 289h1V291h-1zM195 284h1V291h-1zM196 284h1V293h-1zM197 289h1V293h-1zM198 288h1V291h-1zM199 284h1V290h-1zM200 284h1V288h-1zM201 286h1V289h-1zM202 287h1V290h-1zM203 288h1V290h-1zM204 287h1V290h-1zM205 287h1V292h-1zM206 290h1V292h-1zM207 287h1V292h-1zM208 287h1V289h-1zM209 287h1V291h-1zM210 289h1V291h-1zM211 286h1V291h-1zM212 284h1V288h-1zM213 284h1V289h-1zM214 287h1V289h-1zM215 287h1V290h-1zM216 287h1V290h-1zM217 287h1V289h-1zM218 287h1V291h-1zM219 288h1V291h-1zM220 288h1V292h-1zM221 286h1V292h-1zM222 286h1V288h-1zM223 286h1V292h-1zM224 290h1V294h-1zM225 289h1V294h-1zM226 289h1V292h-1zM227 287h1V292h-1zM228 287h1V290h-1zM229 288h1V290h-1zM230 287h1V290h-1zM231 287h1V289h-1zM232 287h1V289h-1zM233 286h1V289h-1zM234 286h1V293h-1zM235 289h1V293h-1zM236 289h1V291h-1zM237 288h1V291h-1zM238 288h1V290h-1zM239 288h1V294h-1zM240 289h1V294h-1zM241 285h1V291h-1zM242 285h1V290h-1zM243 288h1V290h-1zM244 288h1V292h-1zM245 287h1V292h-1zM246 287h1V294h-1zM247 292h1V294h-1zM248 292h1V294h-1zM249 289h1V294h-1zM250 289h1V293h-1zM251 291h1V293h-1zM252 290h1V293h-1zM253 290h1V292h-1zM254 290h1V292h-1zM255 290h1V292h-1zM256 290h1V293h-1zM257 291h1V293h-1zM258 291h1V293h-1zM259 291h1V293h-1zM260 288h1V293h-1zM261 288h1V290h-1zM262 288h1V290h-1zM263 288h1V290h-1zM264 288h1V291h-1zM265 289h1V294h-1zM266 292h1V294h-1zM267 286h1V294h-1zM268 286h1V291h-1zM269 288h1V291h-1zM270 285h1V290h-1zM271 285h1V288h-1zM272 285h1V288h-1zM273 285h1V291h-1zM274 287h1V291h-1zM275 287h1V292h-1zM276 290h1V292h-1zM277 290h1V293h-1zM278 289h1V293h-1zM279 289h1V294h-1zM280 288h1V294h-1zM281 288h1V292h-1zM282 290h1V294h-1zM283 287h1V294h-1zM284 287h1V292h-1zM285 290h1V293h-1zM286 290h1V293h-1zM287 287h1V292h-1zM288 287h1V289h-1zM289 287h1V292h-1zM290 289h1V292h-1zM291 289h1V292h-1zM292 289h1V292h-1zM293 285h1V291h-1zM294 285h1V291h-1zM295 289h1V292h-1zM296 286h1V292h-1zM297 286h1V288h-1zM298 286h1V288h-1zM299 286h1V291h-1zM300 289h1V291h-1zM301 289h1V291h-1zM302 289h1V291h-1zM303 286h1V291h-1zM304 286h1V292h-1zM305 288h1V292h-1zM306 285h1V290h-1zM307 285h1V289h-1zM308 287h1V293h-1zM309 291h1V294h-1zM310 290h1V294h-1zM311 289h1V292h-1zM312 286h1V291h-1zM313 286h1V288h-1zM314 286h1V294h-1zM315 290h1V294h-1zM316 290h1V292h-1zM317 290h1V293h-1zM318 290h1V293h-1zM319 290h1V292h-1zM320 290h1V293h-1zM321 288h1V293h-1zM322 288h1V292h-1zM323 287h1V292h-1zM324 287h1V294h-1zM325 289h1V294h-1zM326 289h1V291h-1zM327 289h1V291h-1zM328 289h1V291h-1zM329 288h1V291h-1zM330 288h1V290h-1zM331 288h1V290h-1zM332 286h1V290h-1zM333 286h1V288h-1zM334 286h1V291h-1zM335 289h1V294h-1zM336 289h1V294h-1zM337 285h1V291h-1zM338 285h1V292h-1zM339 289h1V292h-1zM340 289h1V292h-1zM341 289h1V292h-1zM342 289h1V293h-1zM343 291h1V293h-1zM344 291h1V293h-1zM345 285h1V293h-1zM346 285h1V292h-1zM347 290h1V292h-1zM348 288h1V292h-1zM349 288h1V290h-1zM350 287h1V290h-1zM351 287h1V289h-1zM352 287h1V289h-1zM353 285h1V289h-1zM354 285h1V293h-1zM355 286h1V293h-1zM356 286h1V291h-1zM357 289h1V291h-1zM358 289h1V292h-1zM359 290h1V293h-1zM360 288h1V293h-1zM361 288h1V291h-1zM362 289h1V291h-1zM363 288h1V291h-1zM364 286h1V290h-1zM365 285h1V288h-1zM366 285h1V288h-1zM367 286h1V288h-1zM368 286h1V293h-1zM369 291h1V293h-1zM370 288h1V293h-1zM371 288h1V291h-1zM372 289h1V291h-1zM373 286h1V291h-1zM374 286h1V289h-1zM375 287h1V289h-1zM376 287h1V291h-1zM377 289h1V291h-1zM378 289h1V291h-1zM379 289h1V291h-1zM380 289h1V294h-1zM381 289h1V294h-1zM382 286h1V291h-1zM383 286h1V291h-1zM384 289h1V291h-1zM385 289h1V291h-1zM386 288h1V291h-1zM387 288h1V290h-1zM388 288h1V291h-1zM389 289h1V291h-1zM390 289h1V292h-1zM391 290h1V292h-1zM392 290h1V292h-1zM393 290h1V294h-1zM394 289h1V294h-1zM395 289h1V291h-1zM396 289h1V292h-1zM397 288h1V292h-1zM398 288h1V291h-1zM399 288h1V291h-1zM400 285h1V290h-1zM401 285h1V290h-1zM402 288h1V291h-1zM403 289h1V292h-1zM404 290h1V292h-1zM405 286h1V292h-1zM406 286h1V293h-1zM407 290h1V293h-1zM408 285h1V292h-1zM409 285h1V289h-1zM410 287h1V289h-1zM411 287h1V289h-1zM412 287h1V292h-1zM413 289h1V292h-1zM414 289h1V292h-1zM415 288h1V292h-1zM416 288h1V290h-1zM417 288h1V290h-1zM418 288h1V290h-1zM419 288h1V294h-1zM420 285h1V294h-1zM421 285h1V287h-1zM422 285h1V293h-1zM423 291h1V293h-1zM424 289h1V293h-1zM425 285h1V291h-1zM426 285h1V294h-1zM427 292h1V294h-1zM428 288h1V294h-1zM429 288h1V291h-1zM430 288h1V291h-1zM431 286h1V290h-1zM432 286h1V288h-1zM433 286h1V291h-1zM434 288h1V291h-1zM435 286h1V290h-1zM436 286h1V291h-1zM437 288h1V291h-1zM438 288h1V290h-1zM439 287h1V290h-1zM440 287h1V291h-1zM441 289h1V291h-1zM442 288h1V291h-1zM443 288h1V293h-1zM444 291h1V294h-1zM445 287h1V294h-1zM446 287h1V289h-1zM447 287h1V290h-1zM448 288h1V292h-1zM449 290h1V292h-1zM450 290h1V292h-1zM451 289h1V292h-1zM452 289h1V292h-1zM453 290h1V292h-1zM454 288h1V292h-1zM455 288h1V290h-1zM456 288h1V290h-1zM457 288h1V293h-1zM458 291h1V293h-1zM459 291h1V293h-1zM460 285h1V293h-1zM461 285h1V290h-1zM462 288h1V292h-1zM463 288h1V292h-1zM464 286h1V290h-1zM465 286h1V288h-1zM466 286h1V288h-1zM467 286h1V290h-1zM468 288h1V291h-1zM469 289h1V291h-1zM470 289h1V291h-1zM471 287h1V291h-1zM472 287h1V289h-1zM473 286h1V289h-1zM474 286h1V292h-1zM475 290h1V292h-1zM476 290h1V292h-1zM477 290h1V294h-1zM478 287h1V294h-1zM479 287h1V293h-1zM480 291h1V293h-1zM481 288h1V293h-1zM482 288h1V294h-1zM483 292h1V294h-1zM484 291h1V294h-1zM485 286h1V293h-1zM486 286h1V291h-1zM487 286h1V291h-1zM488 286h1V292h-1zM489 290h1V293h-1zM490 285h1V293h-1zM491 285h1V290h-1zM492 288h1V290h-1zM493 288h1V294h-1zM494 292h1V294h-1zM495 292h1V294h-1zM496 287h1V294h-1zM497 287h1V293h-1zM498 289h1V293h-1zM499 289h1V291h-1zM500 289h1V291h-1zM501 289h1V293h-1zM502 291h1V293h-1zM503 288h1V293h-1zM504 288h1V290h-1zM505 288h1V294h-1zM506 292h1V294h-1zM507 289h1V294h-1zM508 289h1V291h-1zM509 289h1V293h-1zM510 289h1V293h-1zM511 289h1V291h-1zM512 289h1V291h-1zM513 289h1V291h-1zM514 289h1V292h-1zM515 287h1V292h-1z"/>
<rect x="516" y="223" width="1" height="131" fill="#c8c8c8"/>
<text x="55" y="227" font-size="12" fill="#000" text-anchor="end" font-weight="normal" textLength="11.5" lengthAdjust="spacingAndGlyphs" >10</text>
<text x="55" y="254" font-size="12" fill="#000" text-anchor="end" font-weight="normal" textLength="5.5" lengthAdjust="spacingAndGlyphs" >8</text>
<text x="55" y="280" font-size="12" fill="#000" text-anchor="end" font-weight="normal" textLength="5.5" lengthAdjust="spacingAndGlyphs" >6</text>
<text x="55" y="306" font-size="12" fill="#000" text-anchor="end" font-weight="normal" textLength="5.5" lengthAdjust="spacingAndGlyphs" >4</text>
<text x="55" y="332" font-size="12" fill="#000" text-anchor="end" font-weight="normal" textLength="5.5" lengthAdjust="spacingAndGlyphs" >2</text>
<text x="533" y="227" font-size="12" fill="#000" text-anchor="start" font-weight="normal" textLength="11.5" lengthAdjust="spacingAndGlyphs" >20</text>
<text x="533" y="254" font-size="12" fill="#000" text-anchor="start" font-weight="normal" textLength="11.5" lengthAdjust="spacingAndGlyphs" >16</text>
<text x="533" y="280" font-size="12" fill="#000" text-anchor="start" font-weight="normal" textLength="11.5" lengthAdjust="spacingAndGlyphs" >12</text>
<text x="533" y="306" font-size="12" fill="#000" text-anchor="start" font-weight="normal" textLength="5.5" lengthAdjust="spacingAndGlyphs" >8</text>
<text x="533" y="332" font-size="12" fill="#000" text-anchor="start" font-weight="normal" textLength="5.5" lengthAdjust="spacingAndGlyphs" >4</text>
<text x="63.0" y="367" font-size="12" fill="#000" text-anchor="middle" font-weight="normal" textLength="13" lengthAdjust="spacingAndGlyphs" >0.0</text>
<text x="114.9" y="367" font-size="12" fill="#000" text-anchor="middle" font-weight="normal" textLength="13" lengthAdjust="spacingAndGlyphs" >0.5</text>
<text x="166.8" y="367" font-size="12" fill="#000" text-anchor="middle" font-weight="normal" textLength="13" lengthAdjust="spacingAndGlyphs" >1.0</text>
<text x="218.7" y="367" font-size="12" fill="#000" text-anchor="middle" font-weight="normal" textLength="13" lengthAdjust="spacingAndGlyphs" >1.5</text>
<text x="270.6" y="367" font-size="12" fill="#000" text-anchor="middle" font-weight="normal" textLength="13" lengthAdjust="spacingAndGlyphs" >2.0</text>
<text x="322.5" y="367" font-size="12" fill="#000" text-anchor="middle" font-weight="normal" textLength="13" lengthAdjust="spacingAndGlyphs" >2.5</text>
<text x="374.4" y="367" font-size="12" fill="#000" text-anchor="middle" font-weight="normal" textLength="13" lengthAdjust="spacingAndGlyphs" >3.0</text>
<text x="426.3" y="367" font-size="12" fill="#000" text-anchor="middle" font-weight="normal" textLength="13" lengthAdjust="spacingAndGlyphs" >3.5</text>
<text x="478.2" y="367" font-size="12" fill="#000" text-anchor="middle" font-weight="normal" textLength="13" lengthAdjust="spacingAndGlyphs" >4.0</text>
<text x="530.0999999999999" y="367" font-size="12" fill="#000" text-anchor="middle" font-weight="normal" textLength="13" lengthAdjust="spacingAndGlyphs" >4.5</text>
<path fill="none" stroke="#888" d="M28 374.5H18.5V436.5H187.5V374.5H87"/>
<rect x="28.5" y="371.5" width="7" height="7" fill="#00ffff" stroke="#200000"/>
<text x="40.7" y="378" font-size="12" fill="#000" text-anchor="start" font-weight="normal" textLength="43.3" lengthAdjust="spacingAndGlyphs" >PI Errors</text>
<path fill="none" stroke="#888" d="M208 374.5H198.5V436.5H367.5V374.5H277"/>
<rect x="208.5" y="371.5" width="7" height="7" fill="#ffff00" stroke="#200000"/>
<text x="220.4" y="378" font-size="12" fill="#000" text-anchor="start" font-weight="normal" textLength="53.8" lengthAdjust="spacingAndGlyphs" >PI Failures</text>
<path fill="none" stroke="#888" d="M389 374.5H379.5V420.5H548.5V374.5H428"/>
<rect x="389.5" y="371.5" width="7" height="7" fill="#ff00ff" stroke="#200000"/>
<text x="401.7" y="378" font-size="12" fill="#000" text-anchor="start" font-weight="normal" textLength="26" lengthAdjust="spacingAndGlyphs" >Jitter</text>
<path fill="#000" d="M27 383h11v1h-11zM32 384h1v1h-1zM28 385h1v1h-1zM32 385h1v1h-1zM35 385h1v1h-1zM29 386h1v1h-1zM32 386h1v1h-1zM35 386h1v1h-1zM29 387h1v1h-1zM32 387h1v1h-1zM35 387h1v1h-1zM32 388h1v1h-1zM27 389h11v1h-11zM32 390h1v1h-1zM32 391h1v1h-1zM32 392h1v1h-1zM32 393h1v1h-1zM32 394h1v1h-1zM40 382h1v1h-1zM44 382h1v1h-1zM40 383h1v1h-1zM44 383h1v1h-1zM40 384h1v1h-1zM44 384h6v1h-6zM39 385h5v1h-5zM49 385h1v1h-1zM40 386h1v1h-1zM43 386h1v1h-1zM49 386h1v1h-1zM40 387h1v1h-1zM42 387h1v1h-1zM44 387h4v1h-4zM49 387h1v1h-1zM40 388h1v1h-1zM49 388h1v1h-1zM40 389h1v1h-1zM49 389h1v1h-1zM40 390h3v1h-3zM46 390h2v1h-2zM49 390h1v1h-1zM39 391h2v1h-2zM44 391h2v1h-2zM49 391h1v1h-1zM43 392h1v1h-1zM49 392h1v1h-1zM49 393h1v1h-1zM46 394h3v1h-3zM52 386h1v1h-1zM52 387h1v1h-1zM52 391h1v1h-1zM52 392h1v1h-1z"/>
<path fill="#000" d="M28 400h9v1h-9zM28 401h1v1h-1zM36 401h1v1h-1zM28 402h9v1h-9zM28 403h1v1h-1zM36 403h1v1h-1zM28 404h9v1h-9zM27 405h11v1h-11zM28 406h1v1h-1zM31 406h1v1h-1zM28 407h10v1h-10zM28 408h1v1h-1zM31 408h1v1h-1zM33 408h1v1h-1zM36 408h1v1h-1zM28 409h4v1h-4zM34 409h1v1h-1zM36 409h1v1h-1zM28 410h1v1h-1zM31 410h1v1h-1zM34 410h2v1h-2zM27 411h5v1h-5zM33 411h4v1h-4zM31 412h2v1h-2zM37 412h1v1h-1zM44 400h1v1h-1zM44 401h1v1h-1zM44 402h1v1h-1zM44 403h1v1h-1zM39 404h11v1h-11zM44 405h1v1h-1zM43 406h1v1h-1zM45 406h1v1h-1zM43 407h1v1h-1zM45 407h1v1h-1zM42 408h2v1h-2zM46 408h1v1h-1zM42 409h1v1h-1zM46 409h1v1h-1zM41 410h1v1h-1zM47 410h1v1h-1zM40 411h1v1h-1zM48 411h2v1h-2zM39 412h1v1h-1zM49 412h1v1h-1zM52 404h1v1h-1zM52 405h1v1h-1zM52 409h1v1h-1zM52 410h1v1h-1z"/>
<path fill="#000" d="M32 418h1v1h-1zM31 419h1v1h-1zM33 419h1v1h-1zM30 420h2v1h-2zM33 420h2v1h-2zM29 421h2v1h-2zM34 421h2v1h-2zM28 422h2v1h-2zM36 422h1v1h-1zM27 423h1v1h-1zM29 423h7v1h-7zM37 423h2v1h-2zM29 425h7v1h-7zM28 426h1v1h-1zM35 426h1v1h-1zM28 427h1v1h-1zM35 427h1v1h-1zM28 428h1v1h-1zM35 428h1v1h-1zM29 429h7v1h-7zM39 417h4v1h-4zM47 417h1v1h-1zM47 418h1v1h-1zM39 419h5v1h-5zM47 419h1v1h-1zM47 420h1v1h-1zM39 421h4v1h-4zM47 421h1v1h-1zM44 422h7v1h-7zM39 423h4v1h-4zM47 423h1v1h-1zM47 424h1v1h-1zM39 425h4v1h-4zM47 425h1v1h-1zM39 426h1v1h-1zM42 426h1v1h-1zM47 426h1v1h-1zM39 427h1v1h-1zM42 427h1v1h-1zM47 427h1v1h-1zM39 428h4v1h-4zM47 428h1v1h-1zM39 429h1v1h-1zM47 429h1v1h-1zM56 422h1v1h-1zM56 423h1v1h-1zM56 427h1v1h-1zM56 428h1v1h-1z"/>
<text x="175" y="393" font-size="12" fill="#000078" text-anchor="end" font-weight="normal" textLength="25.6" lengthAdjust="spacingAndGlyphs" >10.00</text>
<text x="175" y="411" font-size="12" fill="#000078" text-anchor="end" font-weight="normal" textLength="12" lengthAdjust="spacingAndGlyphs" >35</text>
<text x="175" y="429" font-size="12" fill="#000078" text-anchor="end" font-weight="normal" textLength="35.6" lengthAdjust="spacingAndGlyphs" >121389</text>
<path fill="#000" d="M208 383h11v1h-11zM213 384h1v1h-1zM209 385h1v1h-1zM213 385h1v1h-1zM216 385h1v1h-1zM210 386h1v1h-1zM213 386h1v1h-1zM216 386h1v1h-1zM210 387h1v1h-1zM213 387h1v1h-1zM216 387h1v1h-1zM213 388h1v1h-1zM208 389h11v1h-11zM213 390h1v1h-1zM213 391h1v1h-1zM213 392h1v1h-1zM213 393h1v1h-1zM213 394h1v1h-1zM221 382h1v1h-1zM225 382h1v1h-1zM221 383h1v1h-1zM225 383h1v1h-1zM221 384h1v1h-1zM225 384h6v1h-6zM220 385h5v1h-5zM230 385h1v1h-1zM221 386h1v1h-1zM224 386h1v1h-1zM230 386h1v1h-1zM221 387h1v1h-1zM223 387h1v1h-1zM225 387h4v1h-4zM230 387h1v1h-1zM221 388h1v1h-1zM230 388h1v1h-1zM221 389h1v1h-1zM230 389h1v1h-1zM221 390h3v1h-3zM227 390h2v1h-2zM230 390h1v1h-1zM220 391h2v1h-2zM225 391h2v1h-2zM230 391h1v1h-1zM224 392h1v1h-1zM230 392h1v1h-1zM230 393h1v1h-1zM227 394h3v1h-3zM233 386h1v1h-1zM233 387h1v1h-1zM233 391h1v1h-1zM233 392h1v1h-1z"/>
<path fill="#000" d="M209 400h9v1h-9zM209 401h1v1h-1zM217 401h1v1h-1zM209 402h9v1h-9zM209 403h1v1h-1zM217 403h1v1h-1zM209 404h9v1h-9zM208 405h11v1h-11zM209 406h1v1h-1zM212 406h1v1h-1zM209 407h10v1h-10zM209 408h1v1h-1zM212 408h1v1h-1zM214 408h1v1h-1zM217 408h1v1h-1zM209 409h4v1h-4zM215 409h1v1h-1zM217 409h1v1h-1zM209 410h1v1h-1zM212 410h1v1h-1zM215 410h2v1h-2zM208 411h5v1h-5zM214 411h4v1h-4zM212 412h2v1h-2zM218 412h1v1h-1zM225 400h1v1h-1zM225 401h1v1h-1zM225 402h1v1h-1zM225 403h1v1h-1zM220 404h11v1h-11zM225 405h1v1h-1zM224 406h1v1h-1zM226 406h1v1h-1zM224 407h1v1h-1zM226 407h1v1h-1zM223 408h2v1h-2zM227 408h1v1h-1zM223 409h1v1h-1zM227 409h1v1h-1zM222 410h1v1h-1zM228 410h1v1h-1zM221 411h1v1h-1zM229 411h2v1h-2zM220 412h1v1h-1zM230 412h1v1h-1zM233 404h1v1h-1zM233 405h1v1h-1zM233 409h1v1h-1zM233 410h1v1h-1z"/>
<path fill="#000" d="M213 418h1v1h-1zM212 419h1v1h-1zM214 419h1v1h-1zM211 420h2v1h-2zM214 420h2v1h-2zM210 421h2v1h-2zM215 421h2v1h-2zM209 422h2v1h-2zM217 422h1v1h-1zM208 423h1v1h-1zM210 423h7v1h-7zM218 423h2v1h-2zM210 425h7v1h-7zM209 426h1v1h-1zM216 426h1v1h-1zM209 427h1v1h-1zM216 427h1v1h-1zM209 428h1v1h-1zM216 428h1v1h-1zM210 429h7v1h-7zM220 417h4v1h-4zM228 417h1v1h-1zM228 418h1v1h-1zM220 419h5v1h-5zM228 419h1v1h-1zM228 420h1v1h-1zM220 421h4v1h-4zM228 421h1v1h-1zM225 422h7v1h-7zM220 423h4v1h-4zM228 423h1v1h-1zM228 424h1v1h-1zM220 425h4v1h-4zM228 425h1v1h-1zM220 426h1v1h-1zM223 426h1v1h-1zM228 426h1v1h-1zM220 427h1v1h-1zM223 427h1v1h-1zM228 427h1v1h-1zM220 428h4v1h-4zM228 428h1v1h-1zM220 429h1v1h-1zM228 429h1v1h-1zM237 422h1v1h-1zM237 423h1v1h-1zM237 427h1v1h-1zM237 428h1v1h-1z"/>
<text x="357" y="393" font-size="12" fill="#000078" text-anchor="end" font-weight="normal" textLength="19.3" lengthAdjust="spacingAndGlyphs" >0.04</text>
<text x="357" y="411" font-size="12" fill="#000078" text-anchor="end" font-weight="normal" textLength="5.8" lengthAdjust="spacingAndGlyphs" >6</text>
<text x="357" y="429" font-size="12" fill="#000078" text-anchor="end" font-weight="normal" textLength="17.2" lengthAdjust="spacingAndGlyphs" >421</text>
<path fill="#000" d="M388 383h11v1h-11zM393 384h1v1h-1zM389 385h1v1h-1zM393 385h1v1h-1zM396 385h1v1h-1zM390 386h1v1h-1zM393 386h1v1h-1zM396 386h1v1h-1zM390 387h1v1h-1zM393 387h1v1h-1zM396 387h1v1h-1zM393 388h1v1h-1zM388 389h11v1h-11zM393 390h1v1h-1zM393 391h1v1h-1zM393 392h1v1h-1zM393 393h1v1h-1zM393 394h1v1h-1zM401 382h1v1h-1zM405 382h1v1h-1zM401 383h1v1h-1zM405 383h1v1h-1zM401 384h1v1h-1zM405 384h6v1h-6zM400 385h5v1h-5zM410 385h1v1h-1zM401 386h1v1h-1zM404 386h1v1h-1zM410 386h1v1h-1zM401 387h1v1h-1zM403 387h1v1h-1zM405 387h4v1h-4zM410 387h1v1h-1zM401 388h1v1h-1zM410 388h1v1h-1zM401 389h1v1h-1zM410 389h1v1h-1zM401 390h3v1h-3zM407 390h2v1h-2zM410 390h1v1h-1zM400 391h2v1h-2zM405 391h2v1h-2zM410 391h1v1h-1zM404 392h1v1h-1zM410 392h1v1h-1zM410 393h1v1h-1zM407 394h3v1h-3zM413 386h1v1h-1zM413 387h1v1h-1zM413 391h1v1h-1zM413 392h1v1h-1z"/>
<path fill="#000" d="M389 400h9v1h-9zM389 401h1v1h-1zM397 401h1v1h-1zM389 402h9v1h-9zM389 403h1v1h-1zM397 403h1v1h-1zM389 404h9v1h-9zM388 405h11v1h-11zM389 406h1v1h-1zM392 406h1v1h-1zM389 407h10v1h-10zM389 408h1v1h-1zM392 408h1v1h-1zM394 408h1v1h-1zM397 408h1v1h-1zM389 409h4v1h-4zM395 409h1v1h-1zM397 409h1v1h-1zM389 410h1v1h-1zM392 410h1v1h-1zM395 410h2v1h-2zM388 411h5v1h-5zM394 411h4v1h-4zM392 412h2v1h-2zM398 412h1v1h-1zM405 400h1v1h-1zM405 401h1v1h-1zM405 402h1v1h-1zM405 403h1v1h-1zM400 404h11v1h-11zM405 405h1v1h-1zM404 406h1v1h-1zM406 406h1v1h-1zM404 407h1v1h-1zM406 407h1v1h-1zM403 408h2v1h-2zM407 408h1v1h-1zM403 409h1v1h-1zM407 409h1v1h-1zM402 410h1v1h-1zM408 410h1v1h-1zM401 411h1v1h-1zM409 411h2v1h-2zM400 412h1v1h-1zM410 412h1v1h-1zM413 404h1v1h-1zM413 405h1v1h-1zM413 409h1v1h-1zM413 410h1v1h-1z"/>
<text x="538.2" y="393" font-size="12" fill="#000078" text-anchor="end" font-weight="normal" textLength="30.7" lengthAdjust="spacingAndGlyphs" >9.41 %</text>
<text x="538.2" y="411" font-size="12" fill="#000078" text-anchor="end" font-weight="normal" textLength="30.7" lengthAdjust="spacingAndGlyphs" >14.0 %</text>
<text x="389.6" y="433" font-size="12" fill="#000" text-anchor="start" font-weight="normal" textLength="60.6" lengthAdjust="spacingAndGlyphs" >PO Failures:</text>
<text x="537" y="433" font-size="12" fill="#000078" text-anchor="end" font-weight="normal" textLength="5.2" lengthAdjust="spacingAndGlyphs" >0</text>
<rect x="562.5" y="59.5" width="67" height="18" rx="2" fill="#fff" stroke="#108888"/><rect x="563" y="70" width="66" height="7" fill="#c4c4c4"/><path d="M564 71.5H628" stroke="#f4f4f4" stroke-dasharray="1 1"/>
<path fill="#000" d="M584 62h5v1h-5zM590 62h5v1h-5zM584 63h5v1h-5zM590 63h5v1h-5zM584 64h1v1h-1zM588 64h1v1h-1zM590 64h1v1h-1zM594 64h1v1h-1zM584 65h5v1h-5zM590 65h1v1h-1zM594 65h1v1h-1zM584 66h1v1h-1zM590 66h5v1h-5zM584 67h1v1h-1zM586 67h7v1h-7zM594 67h1v1h-1zM584 68h1v1h-1zM587 68h1v1h-1zM590 68h1v1h-1zM594 68h1v1h-1zM584 69h1v1h-1zM587 69h1v1h-1zM590 69h1v1h-1zM594 69h1v1h-1zM584 70h1v1h-1zM586 70h7v1h-7zM594 70h1v1h-1zM584 71h1v1h-1zM587 71h1v1h-1zM590 71h1v1h-1zM594 71h1v1h-1zM584 72h1v1h-1zM587 72h1v1h-1zM590 72h1v1h-1zM594 72h1v1h-1zM584 73h1v1h-1zM586 73h1v1h-1zM590 73h1v1h-1zM592 73h3v1h-3zM603 61h1v1h-1zM597 62h1v1h-1zM603 62h1v1h-1zM597 63h1v1h-1zM602 63h1v1h-1zM605 63h1v1h-1zM596 64h4v1h-4zM602 64h1v1h-1zM605 64h1v1h-1zM597 65h1v1h-1zM599 65h1v1h-1zM601 65h1v1h-1zM606 65h1v1h-1zM596 66h1v1h-1zM599 66h1v1h-1zM601 66h6v1h-6zM596 67h1v1h-1zM599 67h1v1h-1zM596 68h1v1h-1zM599 68h1v1h-1zM601 68h6v1h-6zM596 69h3v1h-3zM601 69h1v1h-1zM606 69h1v1h-1zM598 70h2v1h-2zM601 70h1v1h-1zM606 70h1v1h-1zM597 71h1v1h-1zM599 71h3v1h-3zM606 71h1v1h-1zM596 72h2v1h-2zM601 72h6v1h-6zM596 73h1v1h-1zM601 73h1v1h-1zM606 73h1v1h-1z"/>
<rect x="654.5" y="59.5" width="67" height="18" rx="2" fill="#fff" stroke="#108888"/><rect x="655" y="70" width="66" height="7" fill="#c4c4c4"/><path d="M656 71.5H720" stroke="#f4f4f4" stroke-dasharray="1 1"/><rect x="655" y="75" width="66" height="2" fill="#8c8c8c"/><path d="M656 74.5V61.5H719V75" fill="none" stroke="#000" stroke-dasharray="1 1"/>
<path fill="#000" d="M669 60h1v1h-1zM674 60h1v1h-1zM669 61h1v1h-1zM674 61h5v1h-5zM668 62h1v1h-1zM670 62h1v1h-1zM673 62h1v1h-1zM677 62h1v1h-1zM668 63h1v1h-1zM670 63h1v1h-1zM672 63h1v1h-1zM674 63h1v1h-1zM677 63h1v1h-1zM669 64h1v1h-1zM675 64h2v1h-2zM669 65h1v1h-1zM671 65h1v1h-1zM675 65h2v1h-2zM667 66h5v1h-5zM674 66h1v1h-1zM676 66h2v1h-2zM669 67h1v1h-1zM672 67h2v1h-2zM678 67h2v1h-2zM668 68h2v1h-2zM671 68h1v1h-1zM675 68h2v1h-2zM668 69h2v1h-2zM671 69h1v1h-1zM668 70h2v1h-2zM673 70h2v1h-2zM669 71h1v1h-1zM675 71h2v1h-2zM677 72h1v1h-1zM681 62h10v1h-10zM689 63h2v1h-2zM688 64h2v1h-2zM687 65h2v1h-2zM686 66h1v1h-1zM686 67h1v1h-1zM686 68h1v1h-1zM686 69h1v1h-1zM686 70h1v1h-1zM686 71h1v1h-1zM686 72h1v1h-1zM684 73h3v1h-3z"/>
<text x="692.5" y="72.5" font-size="13" fill="#000" text-anchor="start" font-weight="normal" textLength="13.5" lengthAdjust="spacingAndGlyphs" >(X)</text>
<rect x="696" y="73" width="7" height="1" fill="#000"/>
<path fill="none" stroke="#c4c4c4" d="M567 92.5H564.5L561.5 95.5V163.5L564.5 166.5H719.5L722.5 163.5V95.5L719.5 92.5H629"/>
<path fill="#108080" d="M578 87h2v1h-2zM571 88h8v1h-8zM570 92h10v1h-10zM575 93h1v1h-1zM574 94h1v1h-1zM574 95h1v1h-1zM574 96h1v1h-1zM573 97h1v1h-1zM572 98h1v1h-1zM586 91h1v1h-1zM585 92h1v1h-1zM584 93h1v1h-1zM582 94h3v1h-3zM580 95h2v1h-2zM584 95h1v1h-1zM584 96h1v1h-1zM584 97h1v1h-1zM584 98h1v1h-1zM588 89h7v1h-7zM594 90h1v1h-1zM594 91h1v1h-1zM593 92h1v1h-1zM592 93h1v1h-1zM591 94h3v1h-3zM590 95h2v1h-2zM594 95h1v1h-1zM589 96h1v1h-1zM595 96h1v1h-1zM587 97h2v1h-2zM595 97h2v1h-2zM600 88h1v1h-1zM600 89h1v1h-1zM599 90h6v1h-6zM599 91h1v1h-1zM604 91h1v1h-1zM598 92h1v1h-1zM604 92h1v1h-1zM597 93h1v1h-1zM603 93h1v1h-1zM603 94h1v1h-1zM602 95h1v1h-1zM601 96h1v1h-1zM600 97h1v1h-1zM598 98h2v1h-2zM607 86h1v1h-1zM613 86h1v1h-1zM607 87h1v1h-1zM609 87h8v1h-8zM607 88h2v1h-2zM613 88h1v1h-1zM606 89h3v1h-3zM610 89h7v1h-7zM605 90h1v1h-1zM607 90h1v1h-1zM613 90h1v1h-1zM605 91h1v1h-1zM607 91h1v1h-1zM609 91h8v1h-8zM607 92h1v1h-1zM610 92h6v1h-6zM607 93h1v1h-1zM610 93h1v1h-1zM615 93h1v1h-1zM607 94h1v1h-1zM610 94h6v1h-6zM607 95h1v1h-1zM610 95h1v1h-1zM615 95h1v1h-1zM607 96h1v1h-1zM610 96h6v1h-6zM607 97h1v1h-1zM610 97h1v1h-1zM615 97h1v1h-1zM607 98h1v1h-1zM610 98h1v1h-1zM614 98h2v1h-2zM619 86h1v1h-1zM617 87h5v1h-5zM623 87h5v1h-5zM619 88h1v1h-1zM623 88h1v1h-1zM627 88h1v1h-1zM619 89h1v1h-1zM623 89h1v1h-1zM627 89h1v1h-1zM617 90h5v1h-5zM623 90h1v1h-1zM625 90h3v1h-3zM618 91h1v1h-1zM620 91h1v1h-1zM623 91h5v1h-5zM618 92h1v1h-1zM620 92h1v1h-1zM623 92h2v1h-2zM627 92h1v1h-1zM617 93h5v1h-5zM623 93h2v1h-2zM627 93h1v1h-1zM619 94h1v1h-1zM623 94h2v1h-2zM626 94h1v1h-1zM617 95h5v1h-5zM623 95h1v1h-1zM625 95h2v1h-2zM619 96h1v1h-1zM623 96h1v1h-1zM625 96h2v1h-2zM619 97h1v1h-1zM623 97h1v1h-1zM625 97h3v1h-3zM619 98h1v1h-1zM623 98h2v1h-2zM627 98h1v1h-1z"/>
<path fill="#000" d="M572 102h1v1h-1zM572 103h1v1h-1zM571 104h6v1h-6zM571 105h1v1h-1zM576 105h1v1h-1zM570 106h1v1h-1zM576 106h1v1h-1zM569 107h1v1h-1zM571 107h2v1h-2zM575 107h1v1h-1zM573 108h1v1h-1zM575 108h1v1h-1zM574 109h1v1h-1zM573 110h1v1h-1zM575 110h2v1h-2zM572 111h1v1h-1zM570 112h2v1h-2zM585 103h1v1h-1zM584 104h2v1h-2zM583 105h2v1h-2zM582 106h1v1h-1zM580 107h3v1h-3zM577 108h3v1h-3zM582 108h1v1h-1zM582 109h1v1h-1zM582 110h1v1h-1zM582 111h1v1h-1zM582 112h1v1h-1zM593 102h2v1h-2zM593 103h1v1h-1zM595 103h1v1h-1zM586 104h9v1h-9zM593 105h1v1h-1zM593 106h1v1h-1zM592 107h1v1h-1zM592 108h1v1h-1zM591 109h1v1h-1zM590 110h2v1h-2zM589 111h2v1h-2zM587 112h2v1h-2zM597 104h1v1h-1zM597 105h1v1h-1zM597 109h1v1h-1zM597 110h1v1h-1z"/>
<text x="568.8" y="126" font-size="12" fill="#000" text-anchor="start" font-weight="normal" textLength="13" lengthAdjust="spacingAndGlyphs" >ID:</text>
<path fill="#000" d="M570 131h9v1h-9zM570 132h1v1h-1zM578 132h1v1h-1zM570 133h1v1h-1zM578 133h1v1h-1zM570 134h1v1h-1zM578 134h1v1h-1zM570 135h1v1h-1zM578 135h1v1h-1zM570 136h9v1h-9zM570 137h1v1h-1zM578 137h1v1h-1zM570 138h1v1h-1zM578 138h1v1h-1zM570 139h1v1h-1zM578 139h1v1h-1zM570 140h1v1h-1zM578 140h1v1h-1zM570 141h9v1h-9zM570 142h1v1h-1zM578 142h1v1h-1zM584 130h1v1h-1zM590 130h1v1h-1zM583 131h1v1h-1zM590 131h1v1h-1zM583 132h1v1h-1zM590 132h1v1h-1zM582 133h1v1h-1zM584 133h8v1h-8zM582 134h1v1h-1zM590 134h1v1h-1zM581 135h2v1h-2zM590 135h1v1h-1zM582 136h1v1h-1zM586 136h1v1h-1zM590 136h1v1h-1zM582 137h1v1h-1zM586 137h1v1h-1zM590 137h1v1h-1zM582 138h1v1h-1zM587 138h1v1h-1zM590 138h1v1h-1zM582 139h1v1h-1zM590 139h1v1h-1zM582 140h1v1h-1zM590 140h1v1h-1zM582 141h1v1h-1zM590 141h1v1h-1zM582 142h1v1h-1zM587 142h3v1h-3zM594 134h1v1h-1zM594 135h1v1h-1zM594 139h1v1h-1zM594 140h1v1h-1z"/>
<text x="568.8" y="155.5" font-size="12" fill="#000" text-anchor="start" font-weight="normal" textLength="29" lengthAdjust="spacingAndGlyphs" >Label:</text>
<text x="617" y="111.5" font-size="12" fill="#000078" text-anchor="start" font-weight="normal" textLength="37.7" lengthAdjust="spacingAndGlyphs" >DVD-R</text>
<text x="617" y="126" font-size="12" fill="#000078" text-anchor="start" font-weight="normal" textLength="60.6" lengthAdjust="spacingAndGlyphs" >FUJIFILM03</text>
<text x="617" y="141" font-size="12" fill="#000078" text-anchor="start" font-weight="normal" textLength="82" lengthAdjust="spacingAndGlyphs" >20 October 2004</text>
<text x="617" y="155.5" font-size="12" fill="#000078" text-anchor="start" font-weight="normal" textLength="72.7" lengthAdjust="spacingAndGlyphs" >CDS_TEST_B2</text>
<path fill="none" stroke="#c4c4c4" d="M567 173.5H564.5L561.5 176.5V335.5L564.5 338.5H719.5L722.5 335.5V176.5L719.5 173.5H614"/>
<text x="569.9" y="177" font-size="12" fill="#108080" text-anchor="start" font-weight="normal" textLength="41.7" lengthAdjust="spacingAndGlyphs" >Settings</text>
<path fill="#000" d="M571 187h1v1h-1zM571 188h1v1h-1zM575 188h5v1h-5zM569 189h5v1h-5zM569 190h5v1h-5zM569 191h1v1h-1zM571 191h1v1h-1zM573 191h1v1h-1zM569 192h11v1h-11zM569 193h1v1h-1zM571 193h1v1h-1zM573 193h1v1h-1zM576 193h1v1h-1zM569 194h1v1h-1zM571 194h1v1h-1zM573 194h1v1h-1zM576 194h1v1h-1zM569 195h5v1h-5zM576 195h1v1h-1zM569 196h5v1h-5zM575 196h1v1h-1zM579 196h1v1h-1zM571 197h1v1h-1zM575 197h1v1h-1zM579 197h1v1h-1zM571 198h1v1h-1zM574 198h6v1h-6zM571 199h1v1h-1zM585 187h1v1h-1zM590 187h1v1h-1zM581 188h2v1h-2zM586 188h1v1h-1zM590 188h1v1h-1zM582 189h2v1h-2zM586 189h1v1h-1zM589 189h1v1h-1zM585 190h7v1h-7zM588 191h1v1h-1zM588 192h1v1h-1zM581 193h2v1h-2zM584 193h8v1h-8zM582 194h1v1h-1zM587 194h2v1h-2zM582 195h1v1h-1zM587 195h1v1h-1zM589 195h1v1h-1zM582 196h1v1h-1zM586 196h1v1h-1zM589 196h2v1h-2zM582 197h1v1h-1zM584 197h2v1h-2zM590 197h2v1h-2zM581 198h3v1h-3zM581 199h1v1h-1zM584 199h8v1h-8zM593 187h1v1h-1zM600 187h1v1h-1zM594 188h1v1h-1zM596 188h8v1h-8zM595 189h1v1h-1zM600 189h1v1h-1zM600 190h1v1h-1zM597 191h7v1h-7zM597 192h1v1h-1zM600 192h1v1h-1zM603 192h1v1h-1zM593 193h2v1h-2zM597 193h7v1h-7zM594 194h1v1h-1zM599 194h2v1h-2zM594 195h1v1h-1zM598 195h1v1h-1zM600 195h2v1h-2zM594 196h1v1h-1zM597 196h1v1h-1zM600 196h1v1h-1zM602 196h1v1h-1zM594 197h1v1h-1zM596 197h1v1h-1zM600 197h1v1h-1zM603 197h1v1h-1zM593 198h3v1h-3zM600 198h1v1h-1zM593 199h1v1h-1zM596 199h8v1h-8zM610 187h1v1h-1zM606 188h10v1h-10zM605 189h1v1h-1zM609 189h1v1h-1zM613 189h1v1h-1zM605 190h1v1h-1zM609 190h1v1h-1zM613 190h1v1h-1zM605 191h1v1h-1zM607 191h9v1h-9zM605 192h1v1h-1zM609 192h1v1h-1zM613 192h1v1h-1zM605 193h1v1h-1zM609 193h5v1h-5zM605 194h1v1h-1zM605 195h1v1h-1zM607 195h8v1h-8zM605 196h1v1h-1zM609 196h1v1h-1zM613 196h1v1h-1zM605 197h1v1h-1zM610 197h1v1h-1zM612 197h1v1h-1zM605 198h1v1h-1zM610 198h4v1h-4zM607 199h3v1h-3zM614 199h2v1h-2z"/>
<path fill="#000" d="M569 213h5v1h-5zM575 213h5v1h-5zM569 214h5v1h-5zM575 214h5v1h-5zM569 215h1v1h-1zM573 215h1v1h-1zM575 215h1v1h-1zM579 215h1v1h-1zM569 216h5v1h-5zM575 216h1v1h-1zM579 216h1v1h-1zM569 217h1v1h-1zM575 217h5v1h-5zM569 218h1v1h-1zM571 218h7v1h-7zM579 218h1v1h-1zM569 219h1v1h-1zM572 219h1v1h-1zM575 219h1v1h-1zM579 219h1v1h-1zM569 220h1v1h-1zM572 220h1v1h-1zM575 220h1v1h-1zM579 220h1v1h-1zM569 221h1v1h-1zM571 221h7v1h-7zM579 221h1v1h-1zM569 222h1v1h-1zM572 222h1v1h-1zM575 222h1v1h-1zM579 222h1v1h-1zM569 223h1v1h-1zM572 223h1v1h-1zM575 223h1v1h-1zM579 223h1v1h-1zM569 224h1v1h-1zM571 224h1v1h-1zM575 224h1v1h-1zM577 224h3v1h-3zM588 212h1v1h-1zM582 213h1v1h-1zM588 213h1v1h-1zM582 214h1v1h-1zM587 214h1v1h-1zM590 214h1v1h-1zM581 215h4v1h-4zM587 215h1v1h-1zM590 215h1v1h-1zM582 216h1v1h-1zM584 216h1v1h-1zM586 216h1v1h-1zM591 216h1v1h-1zM581 217h1v1h-1zM584 217h1v1h-1zM586 217h6v1h-6zM581 218h1v1h-1zM584 218h1v1h-1zM581 219h1v1h-1zM584 219h1v1h-1zM586 219h6v1h-6zM581 220h3v1h-3zM586 220h1v1h-1zM591 220h1v1h-1zM583 221h2v1h-2zM586 221h1v1h-1zM591 221h1v1h-1zM582 222h1v1h-1zM584 222h3v1h-3zM591 222h1v1h-1zM581 223h2v1h-2zM586 223h6v1h-6zM581 224h1v1h-1zM586 224h1v1h-1zM591 224h1v1h-1z"/>
<path fill="#000" d="M570 234h1v1h-1zM575 234h1v1h-1zM570 235h1v1h-1zM575 235h5v1h-5zM569 236h1v1h-1zM571 236h1v1h-1zM574 236h1v1h-1zM578 236h1v1h-1zM569 237h1v1h-1zM571 237h1v1h-1zM573 237h1v1h-1zM575 237h1v1h-1zM578 237h1v1h-1zM570 238h1v1h-1zM576 238h2v1h-2zM570 239h1v1h-1zM572 239h1v1h-1zM576 239h2v1h-2zM568 240h5v1h-5zM575 240h1v1h-1zM577 240h2v1h-2zM570 241h1v1h-1zM573 241h2v1h-2zM579 241h2v1h-2zM569 242h2v1h-2zM572 242h1v1h-1zM576 242h2v1h-2zM569 243h2v1h-2zM572 243h1v1h-1zM569 244h2v1h-2zM574 244h2v1h-2zM570 245h1v1h-1zM576 245h2v1h-2zM578 246h1v1h-1zM582 236h10v1h-10zM590 237h2v1h-2zM589 238h2v1h-2zM588 239h2v1h-2zM587 240h1v1h-1zM587 241h1v1h-1zM587 242h1v1h-1zM587 243h1v1h-1zM587 244h1v1h-1zM587 245h1v1h-1zM587 246h1v1h-1zM585 247h3v1h-3zM600 235h1v1h-1zM595 236h1v1h-1zM600 236h1v1h-1zM595 237h1v1h-1zM600 237h1v1h-1zM594 238h1v1h-1zM596 238h8v1h-8zM593 239h2v1h-2zM592 240h3v1h-3zM597 240h1v1h-1zM602 240h1v1h-1zM594 241h1v1h-1zM598 241h1v1h-1zM602 241h1v1h-1zM594 242h1v1h-1zM598 242h1v1h-1zM601 242h1v1h-1zM594 243h1v1h-1zM598 243h1v1h-1zM601 243h1v1h-1zM594 244h1v1h-1zM598 244h1v1h-1zM601 244h1v1h-1zM594 245h1v1h-1zM601 245h1v1h-1zM594 246h1v1h-1zM596 246h9v1h-9zM594 247h1v1h-1zM605 236h11v1h-11zM605 237h1v1h-1zM608 237h1v1h-1zM611 237h1v1h-1zM615 237h1v1h-1zM605 238h11v1h-11zM605 239h11v1h-11zM610 240h1v1h-1zM606 241h1v1h-1zM608 241h2v1h-2zM611 241h4v1h-4zM606 242h1v1h-1zM608 242h7v1h-7zM606 243h1v1h-1zM608 243h7v1h-7zM606 244h1v1h-1zM608 244h1v1h-1zM614 244h1v1h-1zM606 245h1v1h-1zM608 245h7v1h-7zM606 246h10v1h-10zM606 247h1v1h-1z"/>
<rect x="631.5" y="185.5" width="81" height="19" fill="#fff" stroke="#888"/>
<rect x="695.5" y="187.5" width="15" height="15" fill="#fff" stroke="#999"/>
<rect x="696" y="194" width="14" height="8" fill="#c8c8c8"/>
<path d="M699.5 192.5L703 196L706.5 192.5" fill="none" stroke="#108040" stroke-width="2"/>
<path fill="#000" d="M636 189h9v1h-9zM636 190h1v1h-1zM644 190h1v1h-1zM636 191h9v1h-9zM636 192h1v1h-1zM644 192h1v1h-1zM636 193h9v1h-9zM635 194h11v1h-11zM636 195h1v1h-1zM639 195h1v1h-1zM636 196h10v1h-10zM636 197h1v1h-1zM639 197h1v1h-1zM641 197h1v1h-1zM644 197h1v1h-1zM636 198h4v1h-4zM642 198h1v1h-1zM644 198h1v1h-1zM636 199h1v1h-1zM639 199h1v1h-1zM642 199h2v1h-2zM635 200h5v1h-5zM641 200h4v1h-4zM639 201h2v1h-2zM645 201h1v1h-1zM652 189h1v1h-1zM652 190h1v1h-1zM652 191h1v1h-1zM652 192h1v1h-1zM647 193h11v1h-11zM652 194h1v1h-1zM651 195h1v1h-1zM653 195h1v1h-1zM651 196h1v1h-1zM653 196h1v1h-1zM650 197h2v1h-2zM654 197h1v1h-1zM650 198h1v1h-1zM654 198h1v1h-1zM649 199h1v1h-1zM655 199h1v1h-1zM648 200h1v1h-1zM656 200h2v1h-2zM647 201h1v1h-1zM657 201h1v1h-1z"/>
<rect x="631.5" y="209.5" width="69" height="17" fill="#fff" stroke="#888" stroke-dasharray="1 1"/>
<text x="633.8" y="222" font-size="12" fill="#000" text-anchor="start" font-weight="normal" textLength="44.2" lengthAdjust="spacingAndGlyphs" >0000 MB</text>
<rect x="631.5" y="232.5" width="69" height="17" fill="#fff" stroke="#888" stroke-dasharray="1 1"/>
<text x="633.8" y="244.5" font-size="12" fill="#000" text-anchor="start" font-weight="normal" textLength="44.2" lengthAdjust="spacingAndGlyphs" >4489 MB</text>
<rect x="569.5" y="255.5" width="12" height="12" fill="#fff" stroke="#108888"/>
<path d="M572 261L574.5 264L579 258" fill="none" stroke="#10e010" stroke-width="2"/>
<text x="584.4" y="266" font-size="12" fill="#000" text-anchor="start" font-weight="normal" textLength="67.8" lengthAdjust="spacingAndGlyphs" >Show C1/PIE</text>
<rect x="569.5" y="272.5" width="12" height="12" fill="#fff" stroke="#108888"/>
<path d="M572 278L574.5 281L579 275" fill="none" stroke="#10e010" stroke-width="2"/>
<text x="584.4" y="283" font-size="12" fill="#000" text-anchor="start" font-weight="normal" textLength="67.8" lengthAdjust="spacingAndGlyphs" >Show C2/PIF</text>
<rect x="569.5" y="288.5" width="12" height="12" fill="#fff" stroke="#108888"/>
<path d="M572 294L574.5 297L579 291" fill="none" stroke="#10e010" stroke-width="2"/>
<text x="584.4" y="299" font-size="12" fill="#000" text-anchor="start" font-weight="normal" textLength="57" lengthAdjust="spacingAndGlyphs" >Show Jitter</text>
<rect x="569.5" y="305.5" width="12" height="12" fill="#fff" stroke="#108888"/>
<path d="M572 311L574.5 314L579 308" fill="none" stroke="#10e010" stroke-width="2"/>
<text x="584.4" y="316" font-size="12" fill="#000" text-anchor="start" font-weight="normal" textLength="92.5" lengthAdjust="spacingAndGlyphs" >Show Read Speed</text>
<rect x="569.5" y="321.5" width="12" height="12" fill="#fff" stroke="#108888"/>
<path d="M572 327L574.5 330L579 324" fill="none" stroke="#10e010" stroke-width="2"/>
<text x="584.4" y="332" font-size="12" fill="#000" text-anchor="start" font-weight="normal" textLength="92.5" lengthAdjust="spacingAndGlyphs" >Show Write Speed</text>
<path fill="none" stroke="#c4c4c4" d="M564.5 345.5H719.5L722.5 348.5V364.5L719.5 367.5H564.5L561.5 364.5V348.5Z"/>
<path fill="#000" d="M571 351h7v1h-7zM571 352h1v1h-1zM577 352h1v1h-1zM571 353h1v1h-1zM577 353h1v1h-1zM571 354h7v1h-7zM569 357h5v1h-5zM575 357h5v1h-5zM569 358h1v1h-1zM573 358h1v1h-1zM575 358h1v1h-1zM579 358h1v1h-1zM569 359h1v1h-1zM573 359h1v1h-1zM575 359h1v1h-1zM579 359h1v1h-1zM569 360h1v1h-1zM573 360h1v1h-1zM575 360h1v1h-1zM579 360h1v1h-1zM569 361h5v1h-5zM575 361h5v1h-5zM569 362h1v1h-1zM573 362h1v1h-1zM575 362h1v1h-1zM579 362h1v1h-1zM582 349h4v1h-4zM587 349h5v1h-5zM581 350h1v1h-1zM587 350h1v1h-1zM582 351h4v1h-4zM587 351h5v1h-5zM581 352h1v1h-1zM584 352h1v1h-1zM586 352h1v1h-1zM589 352h1v1h-1zM581 353h1v1h-1zM586 353h1v1h-1zM582 354h9v1h-9zM582 355h9v1h-9zM582 356h1v1h-1zM590 356h1v1h-1zM582 357h9v1h-9zM582 358h1v1h-1zM590 358h1v1h-1zM582 359h9v1h-9zM583 360h2v1h-2zM588 360h2v1h-2zM581 361h2v1h-2zM590 361h2v1h-2zM594 353h7v1h-7zM600 354h1v1h-1zM600 355h1v1h-1zM599 356h1v1h-1zM598 357h1v1h-1zM597 358h3v1h-3zM596 359h2v1h-2zM600 359h1v1h-1zM595 360h1v1h-1zM601 360h1v1h-1zM593 361h2v1h-2zM601 361h2v1h-2zM603 354h8v1h-8zM610 355h1v1h-1zM610 356h1v1h-1zM610 357h1v1h-1zM610 358h1v1h-1zM610 359h1v1h-1zM610 360h1v1h-1zM603 361h8v1h-8zM610 362h1v1h-1zM611 353h10v1h-10zM619 354h1v1h-1zM615 355h1v1h-1zM619 355h1v1h-1zM615 356h1v1h-1zM617 356h2v1h-2zM615 357h1v1h-1zM615 358h1v1h-1zM615 359h1v1h-1zM614 360h1v1h-1zM613 361h1v1h-1zM622 354h1v1h-1zM622 355h1v1h-1zM622 359h1v1h-1zM622 360h1v1h-1z"/>
<text x="706.5" y="360" font-size="12" fill="#000078" text-anchor="end" font-weight="normal" textLength="11.4" lengthAdjust="spacingAndGlyphs" >97</text>
<path fill="none" stroke="#c4c4c4" d="M564.5 374.5H719.5L722.5 377.5V433.5L719.5 436.5H564.5L561.5 433.5V377.5Z"/>
<path fill="#000" d="M569 381h1v1h-1zM574 381h1v1h-1zM577 381h1v1h-1zM569 382h2v1h-2zM573 382h1v1h-1zM576 382h1v1h-1zM570 383h1v1h-1zM573 383h7v1h-7zM572 384h2v1h-2zM576 384h1v1h-1zM572 385h2v1h-2zM576 385h1v1h-1zM573 386h7v1h-7zM569 387h2v1h-2zM573 387h1v1h-1zM576 387h1v1h-1zM570 388h1v1h-1zM573 388h7v1h-7zM570 389h1v1h-1zM573 389h1v1h-1zM576 389h1v1h-1zM570 390h1v1h-1zM573 390h7v1h-7zM570 391h1v1h-1zM569 392h1v1h-1zM571 392h1v1h-1zM569 393h1v1h-1zM572 393h8v1h-8zM584 381h1v1h-1zM583 382h2v1h-2zM587 382h6v1h-6zM582 383h2v1h-2zM582 384h1v1h-1zM585 384h1v1h-1zM584 385h1v1h-1zM583 386h2v1h-2zM586 386h7v1h-7zM582 387h2v1h-2zM590 387h1v1h-1zM581 388h3v1h-3zM590 388h1v1h-1zM583 389h1v1h-1zM590 389h1v1h-1zM583 390h1v1h-1zM590 390h1v1h-1zM583 391h1v1h-1zM590 391h1v1h-1zM583 392h1v1h-1zM590 392h1v1h-1zM588 393h3v1h-3zM596 381h1v1h-1zM601 381h1v1h-1zM596 382h1v1h-1zM601 382h1v1h-1zM603 382h1v1h-1zM594 383h1v1h-1zM596 383h1v1h-1zM601 383h1v1h-1zM604 383h1v1h-1zM595 384h2v1h-2zM601 384h1v1h-1zM595 385h2v1h-2zM598 385h7v1h-7zM596 386h1v1h-1zM601 386h1v1h-1zM596 387h1v1h-1zM600 387h2v1h-2zM595 388h2v1h-2zM600 388h2v1h-2zM594 389h1v1h-1zM596 389h1v1h-1zM600 389h1v1h-1zM602 389h1v1h-1zM593 390h1v1h-1zM596 390h1v1h-1zM599 390h1v1h-1zM602 390h1v1h-1zM596 391h1v1h-1zM599 391h1v1h-1zM603 391h1v1h-1zM596 392h1v1h-1zM598 392h1v1h-1zM603 392h2v1h-2zM596 393h2v1h-2zM604 393h1v1h-1zM606 382h2v1h-2zM609 382h7v1h-7zM609 383h1v1h-1zM615 383h1v1h-1zM609 384h1v1h-1zM615 384h1v1h-1zM605 385h2v1h-2zM609 385h1v1h-1zM615 385h1v1h-1zM609 386h7v1h-7zM610 387h1v1h-1zM613 387h1v1h-1zM610 388h1v1h-1zM613 388h1v1h-1zM607 389h1v1h-1zM610 389h1v1h-1zM613 389h1v1h-1zM607 390h1v1h-1zM610 390h1v1h-1zM613 390h1v1h-1zM606 391h1v1h-1zM609 391h2v1h-2zM613 391h1v1h-1zM615 391h1v1h-1zM605 392h1v1h-1zM609 392h1v1h-1zM613 392h1v1h-1zM615 392h1v1h-1zM605 393h1v1h-1zM608 393h1v1h-1zM613 393h3v1h-3zM618 385h1v1h-1zM618 386h1v1h-1zM618 390h1v1h-1zM618 391h1v1h-1z"/>
<path fill="#000" d="M577 402h2v1h-2zM573 403h1v1h-1zM576 403h1v1h-1zM578 403h1v1h-1zM573 404h1v1h-1zM577 404h1v1h-1zM569 405h10v1h-10zM569 406h1v1h-1zM573 406h1v1h-1zM578 406h1v1h-1zM573 407h1v1h-1zM573 408h1v1h-1zM570 409h1v1h-1zM573 409h1v1h-1zM577 409h1v1h-1zM570 410h1v1h-1zM573 410h1v1h-1zM577 410h1v1h-1zM569 411h1v1h-1zM573 411h1v1h-1zM578 411h1v1h-1zM573 412h1v1h-1zM572 413h2v1h-2zM581 404h2v1h-2zM586 404h1v1h-1zM588 404h1v1h-1zM583 405h1v1h-1zM587 405h1v1h-1zM579 406h1v1h-1zM580 407h2v1h-2zM587 407h2v1h-2zM587 408h1v1h-1zM586 409h1v1h-1zM584 410h2v1h-2zM582 411h2v1h-2zM580 412h2v1h-2zM590 403h2v1h-2zM592 404h1v1h-1zM589 406h2v1h-2zM597 406h1v1h-1zM596 407h1v1h-1zM595 408h1v1h-1zM593 409h2v1h-2zM591 410h2v1h-2zM589 411h2v1h-2zM598 405h6v1h-6zM603 406h1v1h-1zM603 407h1v1h-1zM598 408h6v1h-6zM603 409h1v1h-1zM603 410h1v1h-1zM598 411h6v1h-6zM603 412h1v1h-1zM604 404h1v1h-1zM605 405h2v1h-2zM606 406h2v1h-2zM612 406h1v1h-1zM612 407h1v1h-1zM611 408h1v1h-1zM610 409h1v1h-1zM608 410h2v1h-2zM606 411h2v1h-2zM604 412h2v1h-2zM614 404h1v1h-1zM614 405h1v1h-1zM614 409h1v1h-1zM614 410h1v1h-1z"/>
<path fill="#000" d="M569 418h1v1h-1zM576 418h1v1h-1zM570 419h1v1h-1zM572 419h8v1h-8zM571 420h1v1h-1zM576 420h1v1h-1zM576 421h1v1h-1zM573 422h7v1h-7zM573 423h1v1h-1zM576 423h1v1h-1zM579 423h1v1h-1zM569 424h2v1h-2zM573 424h7v1h-7zM570 425h1v1h-1zM575 425h2v1h-2zM570 426h1v1h-1zM574 426h1v1h-1zM576 426h2v1h-2zM570 427h1v1h-1zM573 427h1v1h-1zM576 427h1v1h-1zM578 427h1v1h-1zM570 428h1v1h-1zM572 428h1v1h-1zM576 428h1v1h-1zM579 428h1v1h-1zM569 429h3v1h-3zM576 429h1v1h-1zM569 430h1v1h-1zM572 430h8v1h-8zM586 418h1v1h-1zM582 419h10v1h-10zM581 420h1v1h-1zM585 420h1v1h-1zM589 420h1v1h-1zM581 421h1v1h-1zM585 421h1v1h-1zM589 421h1v1h-1zM581 422h1v1h-1zM583 422h9v1h-9zM581 423h1v1h-1zM585 423h1v1h-1zM589 423h1v1h-1zM581 424h1v1h-1zM585 424h5v1h-5zM581 425h1v1h-1zM581 426h1v1h-1zM583 426h8v1h-8zM581 427h1v1h-1zM585 427h1v1h-1zM589 427h1v1h-1zM581 428h1v1h-1zM586 428h1v1h-1zM588 428h1v1h-1zM581 429h1v1h-1zM586 429h4v1h-4zM583 430h3v1h-3zM590 430h2v1h-2zM594 422h1v1h-1zM594 423h1v1h-1zM594 427h1v1h-1zM594 428h1v1h-1z"/>
<text x="707.3" y="392" font-size="12" fill="#000078" text-anchor="end" font-weight="normal" textLength="29.6" lengthAdjust="spacingAndGlyphs" >100 %</text>
<text x="706.5" y="411" font-size="12" fill="#000078" text-anchor="end" font-weight="normal" textLength="45" lengthAdjust="spacingAndGlyphs" >4488 MB</text>
<text x="707.7" y="429" font-size="12" fill="#000078" text-anchor="end" font-weight="normal" textLength="31.5" lengthAdjust="spacingAndGlyphs" >8.35 X</text>
</svg>
</body></html>
